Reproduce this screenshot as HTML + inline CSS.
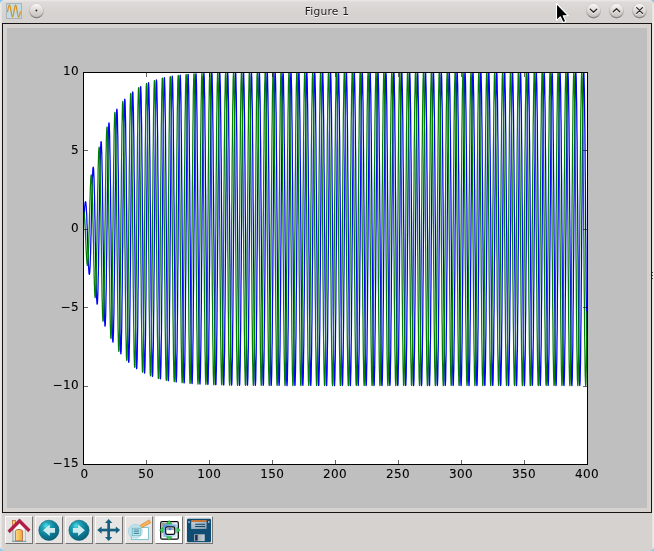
<!DOCTYPE html>
<html><head><meta charset="utf-8"><title>Figure 1</title>
<style>
html,body{margin:0;padding:0;}
body{width:654px;height:551px;overflow:hidden;background:#86ccf6;position:relative;font-family:"DejaVu Sans","Liberation Sans",sans-serif;}
.win{position:absolute;left:0;top:0;width:654px;height:551px;background:#d6d2d0;border-radius:5px;overflow:hidden;}
.edge{position:absolute;top:2px;width:1px;height:547px;}
.title{position:absolute;left:0;top:0;width:654px;height:23px;background:linear-gradient(#ecebea 0,#dddad8 2px,#d6d2d0 14px);}
.title .txt{position:absolute;left:0;width:654px;top:5px;text-align:center;font-size:10.7px;letter-spacing:0.2px;line-height:13px;color:#1a1a1a;text-shadow:0 1px 0 rgba(255,255,255,.9);will-change:transform;}
.frame{position:absolute;left:2px;top:23px;width:648px;height:488px;border:1px solid #161414;background:#d6d2d0;}
.fig{position:absolute;left:7px;top:28px;width:640px;height:480px;background:#bfbfbf;}
.plot{position:absolute;left:0;top:0;will-change:transform;}
.chrome{position:absolute;left:0;top:0;}
.btn{position:absolute;top:516px;width:26px;height:26px;background:#e6e5e4;border:1px solid;border-color:#fbfbfb #767472 #767472 #fbfbfb;}
</style></head><body>
<div class="win">
<div class="title"><div class="txt">Figure 1</div></div>
<div class="frame"></div>
<div class="fig"></div>
<svg class="plot" width="654" height="551" viewBox="0 0 654 551">
<defs><clipPath id="ax"><rect x="83.25" y="72.00" width="503.75" height="392.00"/></clipPath></defs>
<rect x="83.25" y="72.00" width="503.75" height="392.00" fill="#fff"/>
<g clip-path="url(#ax)" fill="none" stroke-width="1.25" stroke-linejoin="round">
<polyline stroke="#0000ff" points="83.2,228.8 83.4,227.2 83.5,225.4 83.6,223.5 83.8,221.6 83.9,219.6 84.0,217.6 84.1,215.6 84.3,213.6 84.4,211.7 84.5,209.8 84.6,208.1 84.8,206.5 84.9,205.1 85.0,203.9 85.1,203.0 85.3,202.3 85.4,201.8 85.5,201.7 85.6,201.9 85.8,202.3 85.9,203.1 86.0,204.2 86.1,205.7 86.3,207.4 86.4,209.5 86.5,211.8 86.7,214.5 86.8,217.4 86.9,220.5 87.0,223.8 87.2,227.3 87.3,230.9 87.4,234.7 87.5,238.4 87.7,242.2 87.8,246.0 87.9,249.7 88.0,253.3 88.2,256.8 88.3,260.0 88.4,263.0 88.5,265.8 88.7,268.2 88.8,270.2 88.9,271.9 89.0,273.2 89.2,274.0 89.3,274.4 89.4,274.3 89.5,273.8 89.7,272.7 89.8,271.2 89.9,269.2 90.1,266.7 90.2,263.8 90.3,260.5 90.4,256.7 90.6,252.6 90.7,248.1 90.8,243.4 90.9,238.4 91.1,233.2 91.2,227.9 91.3,222.5 91.4,217.0 91.6,211.6 91.7,206.2 91.8,201.0 91.9,195.9 92.1,191.1 92.2,186.6 92.3,182.5 92.4,178.8 92.6,175.5 92.7,172.7 92.8,170.4 92.9,168.7 93.1,167.6 93.2,167.1 93.3,167.3 93.5,168.0 93.6,169.4 93.7,171.4 93.8,174.0 94.0,177.3 94.1,181.1 94.2,185.4 94.3,190.2 94.5,195.5 94.6,201.3 94.7,207.3 94.8,213.7 95.0,220.3 95.1,227.1 95.2,234.0 95.3,240.9 95.5,247.8 95.6,254.6 95.7,261.2 95.8,267.5 96.0,273.6 96.1,279.2 96.2,284.4 96.3,289.1 96.5,293.3 96.6,296.8 96.7,299.7 96.9,301.9 97.0,303.4 97.1,304.2 97.2,304.2 97.4,303.4 97.5,301.9 97.6,299.6 97.7,296.6 97.9,292.8 98.0,288.4 98.1,283.3 98.2,277.6 98.4,271.4 98.5,264.7 98.6,257.5 98.7,250.0 98.9,242.2 99.0,234.2 99.1,226.1 99.2,217.9 99.4,209.7 99.5,201.7 99.6,193.9 99.7,186.3 99.9,179.1 100.0,172.4 100.1,166.2 100.3,160.5 100.4,155.5 100.5,151.2 100.6,147.6 100.8,144.8 100.9,142.9 101.0,141.8 101.1,141.6 101.3,142.2 101.4,143.7 101.5,146.1 101.6,149.3 101.8,153.4 101.9,158.3 102.0,163.9 102.1,170.2 102.3,177.1 102.4,184.6 102.5,192.6 102.6,201.1 102.8,209.8 102.9,218.9 103.0,228.1 103.1,237.3 103.3,246.6 103.4,255.7 103.5,264.6 103.7,273.2 103.8,281.4 103.9,289.2 104.0,296.4 104.2,302.9 104.3,308.8 104.4,313.9 104.5,318.2 104.7,321.6 104.8,324.0 104.9,325.6 105.0,326.2 105.2,325.8 105.3,324.4 105.4,322.0 105.5,318.7 105.7,314.5 105.8,309.4 105.9,303.5 106.0,296.7 106.2,289.3 106.3,281.2 106.4,272.5 106.5,263.3 106.7,253.8 106.8,243.9 106.9,233.8 107.1,223.7 107.2,213.5 107.3,203.4 107.4,193.5 107.6,183.9 107.7,174.8 107.8,166.1 107.9,158.0 108.1,150.6 108.2,143.9 108.3,138.0 108.4,133.0 108.6,129.0 108.7,125.9 108.8,123.9 108.9,122.9 109.1,123.0 109.2,124.1 109.3,126.3 109.4,129.5 109.6,133.7 109.7,138.9 109.8,145.1 109.9,152.1 110.1,159.9 110.2,168.4 110.3,177.6 110.5,187.3 110.6,197.5 110.7,208.0 110.8,218.8 111.0,229.8 111.1,240.8 111.2,251.7 111.3,262.4 111.5,272.8 111.6,282.9 111.7,292.4 111.8,301.3 112.0,309.6 112.1,317.1 112.2,323.7 112.3,329.4 112.5,334.1 112.6,337.7 112.7,340.3 112.8,341.8 113.0,342.2 113.1,341.4 113.2,339.5 113.3,336.4 113.5,332.3 113.6,327.1 113.7,320.9 113.9,313.8 114.0,305.8 114.1,297.0 114.2,287.5 114.4,277.3 114.5,266.7 114.6,255.6 114.7,244.2 114.9,232.6 115.0,221.0 115.1,209.3 115.2,197.9 115.4,186.7 115.5,175.8 115.6,165.5 115.7,155.8 115.9,146.8 116.0,138.6 116.1,131.2 116.2,124.8 116.4,119.4 116.5,115.1 116.6,112.0 116.7,110.0 116.9,109.1 117.0,109.5 117.1,111.1 117.3,113.8 117.4,117.7 117.5,122.8 117.6,128.9 117.8,136.0 117.9,144.1 118.0,153.1 118.1,162.8 118.3,173.2 118.4,184.3 118.5,195.7 118.6,207.6 118.8,219.7 118.9,231.9 119.0,244.2 119.1,256.3 119.3,268.2 119.4,279.7 119.5,290.7 119.6,301.1 119.8,310.9 119.9,319.8 120.0,327.9 120.1,335.0 120.3,341.0 120.4,346.0 120.5,349.7 120.7,352.3 120.8,353.7 120.9,353.8 121.0,352.6 121.2,350.2 121.3,346.6 121.4,341.8 121.5,335.8 121.7,328.8 121.8,320.8 121.9,311.8 122.0,301.9 122.2,291.3 122.3,280.1 122.4,268.3 122.5,256.0 122.7,243.5 122.8,230.8 122.9,218.1 123.0,205.4 123.2,193.0 123.3,180.8 123.4,169.2 123.6,158.0 123.7,147.6 123.8,138.0 123.9,129.2 124.1,121.5 124.2,114.8 124.3,109.2 124.4,104.8 124.6,101.6 124.7,99.7 124.8,99.1 124.9,99.8 125.1,101.8 125.2,105.0 125.3,109.5 125.4,115.2 125.6,122.1 125.7,130.0 125.8,139.0 125.9,148.8 126.1,159.5 126.2,170.9 126.3,182.9 126.4,195.3 126.6,208.2 126.7,221.2 126.8,234.4 127.0,247.5 127.1,260.5 127.2,273.2 127.3,285.4 127.5,297.2 127.6,308.2 127.7,318.5 127.8,327.9 128.0,336.3 128.1,343.7 128.2,349.9 128.3,354.9 128.5,358.7 128.6,361.2 128.7,362.3 128.8,362.2 129.0,360.7 129.1,357.8 129.2,353.7 129.3,348.3 129.5,341.7 129.6,334.0 129.7,325.2 129.8,315.4 130.0,304.8 130.1,293.3 130.2,281.2 130.4,268.6 130.5,255.5 130.6,242.2 130.7,228.7 130.9,215.2 131.0,201.7 131.1,188.6 131.2,175.8 131.4,163.5 131.5,151.9 131.6,141.0 131.7,131.0 131.9,121.9 132.0,113.9 132.1,107.1 132.2,101.4 132.4,97.0 132.5,93.9 132.6,92.2 132.7,91.8 132.9,92.8 133.0,95.2 133.1,98.9 133.2,103.9 133.4,110.2 133.5,117.6 133.6,126.2 133.8,135.8 133.9,146.4 134.0,157.8 134.1,169.9 134.3,182.6 134.4,195.8 134.5,209.4 134.6,223.2 134.8,237.0 134.9,250.8 135.0,264.4 135.1,277.6 135.3,290.4 135.4,302.5 135.5,314.0 135.6,324.6 135.8,334.3 135.9,342.9 136.0,350.4 136.1,356.7 136.3,361.7 136.4,365.4 136.5,367.7 136.6,368.7 136.8,368.2 136.9,366.3 137.0,363.1 137.2,358.5 137.3,352.7 137.4,345.5 137.5,337.3 137.7,327.9 137.8,317.5 137.9,306.2 138.0,294.1 138.2,281.3 138.3,268.1 138.4,254.4 138.5,240.4 138.7,226.3 138.8,212.2 138.9,198.3 139.0,184.6 139.2,171.4 139.3,158.7 139.4,146.8 139.5,135.6 139.7,125.4 139.8,116.1 139.9,108.0 140.0,101.1 140.2,95.5 140.3,91.2 140.4,88.2 140.6,86.7 140.7,86.6 140.8,87.9 140.9,90.6 141.1,94.7 141.2,100.2 141.3,106.9 141.4,114.9 141.6,124.0 141.7,134.1 141.8,145.3 141.9,157.2 142.1,169.9 142.2,183.2 142.3,197.0 142.4,211.1 142.6,225.4 142.7,239.7 142.8,253.9 142.9,267.9 143.1,281.6 143.2,294.7 143.3,307.1 143.4,318.8 143.6,329.6 143.7,339.4 143.8,348.1 144.0,355.6 144.1,361.9 144.2,366.8 144.3,370.4 144.5,372.5 144.6,373.2 144.7,372.5 144.8,370.3 145.0,366.7 145.1,361.8 145.2,355.5 145.3,347.9 145.5,339.1 145.6,329.2 145.7,318.3 145.8,306.5 146.0,293.9 146.1,280.7 146.2,266.9 146.3,252.7 146.5,238.3 146.6,223.8 146.7,209.3 146.8,195.0 147.0,181.0 147.1,167.5 147.2,154.6 147.4,142.4 147.5,131.1 147.6,120.7 147.7,111.5 147.9,103.3 148.0,96.5 148.1,90.9 148.2,86.8 148.4,84.0 148.5,82.7 148.6,82.8 148.7,84.4 148.9,87.5 149.0,92.0 149.1,97.8 149.2,104.9 149.4,113.3 149.5,122.9 149.6,133.5 149.7,145.1 149.9,157.5 150.0,170.7 150.1,184.4 150.2,198.6 150.4,213.1 150.5,227.8 150.6,242.4 150.8,257.0 150.9,271.3 151.0,285.2 151.1,298.5 151.3,311.1 151.4,322.9 151.5,333.8 151.6,343.7 151.8,352.4 151.9,359.8 152.0,366.0 152.1,370.8 152.3,374.2 152.4,376.1 152.5,376.5 152.6,375.5 152.8,373.0 152.9,369.1 153.0,363.8 153.1,357.1 153.3,349.1 153.4,339.9 153.5,329.6 153.6,318.3 153.8,306.1 153.9,293.1 154.0,279.5 154.2,265.3 154.3,250.8 154.4,236.0 154.5,221.2 154.7,206.4 154.8,191.9 154.9,177.7 155.0,164.0 155.2,150.9 155.3,138.6 155.4,127.3 155.5,116.9 155.7,107.6 155.8,99.6 155.9,92.8 156.0,87.4 156.2,83.4 156.3,80.8 156.4,79.8 156.5,80.2 156.7,82.1 156.8,85.4 156.9,90.2 157.0,96.4 157.2,104.0 157.3,112.7 157.4,122.7 157.6,133.7 157.7,145.6 157.8,158.4 157.9,171.9 158.1,186.0 158.2,200.5 158.3,215.3 158.4,230.3 158.6,245.2 158.7,260.0 158.8,274.5 158.9,288.5 159.1,301.9 159.2,314.6 159.3,326.5 159.4,337.4 159.6,347.2 159.7,355.8 159.8,363.2 159.9,369.2 160.1,373.8 160.2,377.0 160.3,378.7 160.4,378.9 160.6,377.6 160.7,374.8 160.8,370.6 161.0,364.9 161.1,357.9 161.2,349.5 161.3,340.0 161.5,329.4 161.6,317.7 161.7,305.1 161.8,291.8 162.0,277.9 162.1,263.4 162.2,248.6 162.3,233.6 162.5,218.5 162.6,203.6 162.7,188.9 162.8,174.5 163.0,160.7 163.1,147.6 163.2,135.3 163.3,123.9 163.5,113.6 163.6,104.4 163.7,96.5 163.9,89.8 164.0,84.6 164.1,80.8 164.2,78.5 164.4,77.6 164.5,78.3 164.6,80.5 164.7,84.2 164.9,89.3 165.0,95.8 165.1,103.7 165.2,112.8 165.4,123.0 165.5,134.4 165.6,146.6 165.7,159.7 165.9,173.5 166.0,187.9 166.1,202.6 166.2,217.7 166.4,232.8 166.5,247.9 166.6,262.9 166.7,277.5 166.9,291.6 167.0,305.0 167.1,317.8 167.3,329.6 167.4,340.5 167.5,350.2 167.6,358.7 167.8,365.9 167.9,371.8 168.0,376.2 168.1,379.2 168.3,380.6 168.4,380.6 168.5,379.0 168.6,375.9 168.8,371.3 168.9,365.4 169.0,358.0 169.1,349.4 169.3,339.5 169.4,328.6 169.5,316.6 169.6,303.8 169.8,290.2 169.9,276.0 170.0,261.3 170.1,246.3 170.3,231.1 170.4,215.9 170.5,200.8 170.7,186.0 170.8,171.6 170.9,157.7 171.0,144.6 171.2,132.3 171.3,121.0 171.4,110.8 171.5,101.7 171.7,93.9 171.8,87.4 171.9,82.4 172.0,78.8 172.2,76.7 172.3,76.1 172.4,77.1 172.5,79.6 172.7,83.5 172.8,88.9 172.9,95.8 173.0,103.9 173.2,113.3 173.3,123.9 173.4,135.5 173.5,148.0 173.7,161.4 173.8,175.4 173.9,190.0 174.1,204.9 174.2,220.1 174.3,235.4 174.4,250.7 174.6,265.7 174.7,280.3 174.8,294.5 174.9,308.0 175.1,320.7 175.2,332.4 175.3,343.2 175.4,352.8 175.6,361.2 175.7,368.2 175.8,373.9 175.9,378.1 176.1,380.8 176.2,382.0 176.3,381.7 176.4,379.8 176.6,376.5 176.7,371.6 176.8,365.4 176.9,357.7 177.1,348.8 177.2,338.7 177.3,327.4 177.5,315.2 177.6,302.1 177.7,288.3 177.8,273.9 178.0,259.0 178.1,243.9 178.2,228.5 178.3,213.2 178.5,198.0 178.6,183.1 178.7,168.7 178.8,154.9 179.0,141.8 179.1,129.6 179.2,118.4 179.3,108.2 179.5,99.3 179.6,91.7 179.7,85.4 179.8,80.6 180.0,77.2 180.1,75.4 180.2,75.1 180.3,76.3 180.5,79.1 180.6,83.3 180.7,89.0 180.9,96.1 181.0,104.5 181.1,114.2 181.2,125.0 181.4,136.9 181.5,149.7 181.6,163.2 181.7,177.5 181.9,192.2 182.0,207.3 182.1,222.7 182.2,238.1 182.4,253.4 182.5,268.4 182.6,283.1 182.7,297.2 182.9,310.7 183.0,323.3 183.1,335.0 183.2,345.6 183.4,355.1 183.5,363.3 183.6,370.2 183.7,375.6 183.9,379.6 184.0,382.1 184.1,383.0 184.3,382.4 184.4,380.3 184.5,376.7 184.6,371.5 184.8,365.0 184.9,357.1 185.0,347.9 185.1,337.5 185.3,326.0 185.4,313.6 185.5,300.3 185.6,286.3 185.8,271.7 185.9,256.7 186.0,241.4 186.1,225.9 186.3,210.5 186.4,195.3 186.5,180.4 186.6,166.0 186.8,152.2 186.9,139.2 187.0,127.1 187.1,116.0 187.3,106.0 187.4,97.2 187.5,89.8 187.7,83.7 187.8,79.1 187.9,76.0 188.0,74.4 188.2,74.4 188.3,75.9 188.4,78.9 188.5,83.4 188.7,89.4 188.8,96.8 188.9,105.5 189.0,115.4 189.2,126.4 189.3,138.5 189.4,151.5 189.5,165.3 189.7,179.7 189.8,194.6 189.9,209.8 190.0,225.2 190.2,240.7 190.3,256.1 190.4,271.1 190.5,285.8 190.7,299.9 190.8,313.3 190.9,325.8 191.1,337.4 191.2,347.9 191.3,357.2 191.4,365.2 191.6,371.8 191.7,377.1 191.8,380.8 191.9,383.0 192.1,383.7 192.2,382.9 192.3,380.5 192.4,376.5 192.6,371.2 192.7,364.3 192.8,356.2 192.9,346.7 193.1,336.1 193.2,324.4 193.3,311.7 193.4,298.3 193.6,284.1 193.7,269.3 193.8,254.2 193.9,238.8 194.1,223.3 194.2,207.9 194.3,192.6 194.5,177.8 194.6,163.4 194.7,149.7 194.8,136.7 195.0,124.7 195.1,113.8 195.2,103.9 195.3,95.4 195.5,88.1 195.6,82.3 195.7,77.9 195.8,75.0 196.0,73.7 196.1,73.9 196.2,75.7 196.3,79.0 196.5,83.8 196.6,90.0 196.7,97.7 196.8,106.6 197.0,116.8 197.1,128.0 197.2,140.3 197.3,153.5 197.5,167.4 197.6,182.0 197.7,197.0 197.9,212.3 198.0,227.8 198.1,243.4 198.2,258.7 198.4,273.8 198.5,288.4 198.6,302.4 198.7,315.7 198.9,328.2 199.0,339.6 199.1,349.9 199.2,359.0 199.4,366.9 199.5,373.3 199.6,378.3 199.7,381.8 199.9,383.8 200.0,384.2 200.1,383.1 200.2,380.4 200.4,376.2 200.5,370.6 200.6,363.5 200.7,355.1 200.9,345.4 201.0,334.5 201.1,322.6 201.3,309.8 201.4,296.1 201.5,281.8 201.6,266.9 201.8,251.7 201.9,236.2 202.0,220.7 202.1,205.2 202.3,190.0 202.4,175.1 202.5,160.8 202.6,147.2 202.8,134.4 202.9,122.5 203.0,111.7 203.1,102.0 203.3,93.7 203.4,86.6 203.5,81.0 203.6,76.9 203.8,74.3 203.9,73.2 204.0,73.7 204.1,75.7 204.3,79.3 204.4,84.3 204.5,90.8 204.7,98.7 204.8,107.9 204.9,118.3 205.0,129.8 205.2,142.3 205.3,155.6 205.4,169.7 205.5,184.4 205.7,199.5 205.8,214.9 205.9,230.5 206.0,246.0 206.2,261.4 206.3,276.4 206.4,291.0 206.5,304.9 206.7,318.1 206.8,330.4 206.9,341.7 207.0,351.8 207.2,360.8 207.3,368.4 207.4,374.6 207.6,379.3 207.7,382.6 207.8,384.3 207.9,384.5 208.1,383.1 208.2,380.2 208.3,375.7 208.4,369.8 208.6,362.5 208.7,353.8 208.8,343.9 208.9,332.8 209.1,320.7 209.2,307.7 209.3,293.9 209.4,279.4 209.6,264.5 209.7,249.2 209.8,233.6 209.9,218.0 210.1,202.6 210.2,187.4 210.3,172.6 210.4,158.3 210.6,144.8 210.7,132.1 210.8,120.4 211.0,109.7 211.1,100.3 211.2,92.1 211.3,85.3 211.5,79.9 211.6,76.0 211.7,73.7 211.8,72.9 212.0,73.6 212.1,75.9 212.2,79.7 212.3,85.0 212.5,91.8 212.6,99.9 212.7,109.3 212.8,119.9 213.0,131.6 213.1,144.3 213.2,157.8 213.3,172.0 213.5,186.8 213.6,202.0 213.7,217.5 213.8,233.1 214.0,248.6 214.1,264.0 214.2,279.0 214.4,293.5 214.5,307.3 214.6,320.4 214.7,332.6 214.9,343.7 215.0,353.6 215.1,362.4 215.2,369.8 215.4,375.7 215.5,380.3 215.6,383.3 215.7,384.7 215.9,384.6 216.0,383.0 216.1,379.8 216.2,375.1 216.4,368.9 216.5,361.3 216.6,352.4 216.7,342.3 216.9,331.0 217.0,318.8 217.1,305.6 217.2,291.6 217.4,277.0 217.5,262.0 217.6,246.6 217.8,231.0 217.9,215.4 218.0,200.0 218.1,184.8 218.3,170.0 218.4,155.9 218.5,142.5 218.6,129.9 218.8,118.3 218.9,107.9 219.0,98.6 219.1,90.6 219.3,84.1 219.4,78.9 219.5,75.3 219.6,73.2 219.8,72.6 219.9,73.7 220.0,76.2 220.1,80.3 220.3,85.9 220.4,92.9 220.5,101.2 220.6,110.9 220.8,121.7 220.9,133.6 221.0,146.4 221.2,160.0 221.3,174.4 221.4,189.3 221.5,204.6 221.7,220.1 221.8,235.7 221.9,251.3 222.0,266.6 222.2,281.5 222.3,295.9 222.4,309.7 222.5,322.6 222.7,334.6 222.8,345.6 222.9,355.4 223.0,363.9 223.2,371.1 223.3,376.8 223.4,381.1 223.5,383.8 223.7,385.0 223.8,384.6 223.9,382.7 224.0,379.3 224.2,374.3 224.3,367.9 224.4,360.1 224.6,351.0 224.7,340.6 224.8,329.2 224.9,316.7 225.1,303.4 225.2,289.3 225.3,274.6 225.4,259.4 225.6,244.0 225.7,228.4 225.8,212.8 225.9,197.3 226.1,182.2 226.2,167.5 226.3,153.5 226.4,140.2 226.6,127.8 226.7,116.4 226.8,106.1 226.9,97.0 227.1,89.3 227.2,82.9 227.3,78.0 227.4,74.7 227.6,72.8 227.7,72.5 227.8,73.8 228.0,76.6 228.1,81.0 228.2,86.8 228.3,94.0 228.5,102.6 228.6,112.5 228.7,123.5 228.8,135.6 229.0,148.6 229.1,162.3 229.2,176.8 229.3,191.8 229.5,207.1 229.6,222.7 229.7,238.3 229.8,253.9 230.0,269.2 230.1,284.0 230.2,298.4 230.3,312.0 230.5,324.8 230.6,336.7 230.7,347.4 230.8,357.0 231.0,365.3 231.1,372.3 231.2,377.8 231.4,381.8 231.5,384.3 231.6,385.2 231.7,384.6 231.9,382.4 232.0,378.7 232.1,373.5 232.2,366.8 232.4,358.8 232.5,349.4 232.6,338.9 232.7,327.2 232.9,314.6 233.0,301.1 233.1,286.9 233.2,272.1 233.4,256.9 233.5,241.4 233.6,225.8 233.7,210.2 233.9,194.7 234.0,179.7 234.1,165.1 234.2,151.1 234.4,138.0 234.5,125.7 234.6,114.5 234.8,104.4 234.9,95.5 235.0,88.0 235.1,81.9 235.3,77.3 235.4,74.1 235.5,72.5 235.6,72.5 235.8,74.1 235.9,77.1 236.0,81.7 236.1,87.8 236.3,95.3 236.4,104.1 236.5,114.2 236.6,125.4 236.8,137.6 236.9,150.8 237.0,164.7 237.1,179.3 237.3,194.3 237.4,209.7 237.5,225.3 237.6,241.0 237.8,256.5 237.9,271.7 238.0,286.5 238.2,300.8 238.3,314.3 238.4,326.9 238.5,338.6 238.7,349.2 238.8,358.6 238.9,366.7 239.0,373.4 239.2,378.6 239.3,382.4 239.4,384.6 239.5,385.3 239.7,384.4 239.8,382.0 239.9,378.0 240.0,372.5 240.2,365.6 240.3,357.4 240.4,347.8 240.5,337.1 240.7,325.2 240.8,312.4 240.9,298.8 241.0,284.5 241.2,269.6 241.3,254.3 241.4,238.8 241.6,223.1 241.7,207.5 241.8,192.2 241.9,177.1 242.1,162.6 242.2,148.8 242.3,135.8 242.4,123.7 242.6,112.6 242.7,102.7 242.8,94.1 242.9,86.8 243.1,80.9 243.2,76.5 243.3,73.7 243.4,72.3 243.6,72.6 243.7,74.4 243.8,77.7 243.9,82.6 244.1,88.9 244.2,96.6 244.3,105.6 244.5,115.9 244.6,127.3 244.7,139.7 244.8,153.0 245.0,167.1 245.1,181.7 245.2,196.9 245.3,212.3 245.5,228.0 245.6,243.6 245.7,259.1 245.8,274.3 246.0,289.0 246.1,303.1 246.2,316.5 246.3,329.0 246.5,340.5 246.6,350.9 246.7,360.1 246.8,368.0 247.0,374.4 247.1,379.5 247.2,383.0 247.3,384.9 247.5,385.3 247.6,384.2 247.7,381.5 247.9,377.3 248.0,371.5 248.1,364.4 248.2,355.9 248.4,346.1 248.5,335.2 248.6,323.2 248.7,310.2 248.9,296.5 249.0,282.0 249.1,267.1 249.2,251.7 249.4,236.1 249.5,220.5 249.6,204.9 249.7,189.6 249.9,174.6 250.0,160.2 250.1,146.5 250.2,133.6 250.4,121.7 250.5,110.8 250.6,101.1 250.7,92.7 250.9,85.6 251.0,80.0 251.1,75.9 251.3,73.3 251.4,72.2 251.5,72.7 251.6,74.8 251.8,78.4 251.9,83.5 252.0,90.0 252.1,98.0 252.3,107.2 252.4,117.7 252.5,129.3 252.6,141.9 252.8,155.3 252.9,169.5 253.0,184.2 253.1,199.5 253.3,215.0 253.4,230.6 253.5,246.2 253.6,261.7 253.8,276.8 253.9,291.5 254.0,305.5 254.1,318.7 254.3,331.1 254.4,342.4 254.5,352.6 254.7,361.6 254.8,369.2 254.9,375.4 255.0,380.2 255.2,383.5 255.3,385.2 255.4,385.3 255.5,383.9 255.7,380.9 255.8,376.4 255.9,370.5 256.0,363.1 256.2,354.4 256.3,344.4 256.4,333.3 256.5,321.1 256.7,308.0 256.8,294.1 256.9,279.6 257.0,264.5 257.2,249.1 257.3,233.5 257.4,217.9 257.5,202.3 257.7,187.0 257.8,172.2 257.9,157.9 258.1,144.3 258.2,131.5 258.3,119.7 258.4,109.1 258.6,99.6 258.7,91.4 258.8,84.6 258.9,79.2 259.1,75.3 259.2,72.9 259.3,72.1 259.4,72.9 259.6,75.2 259.7,79.1 259.8,84.4 259.9,91.2 260.1,99.4 260.2,108.9 260.3,119.5 260.4,131.3 260.6,144.0 260.7,157.6 260.8,171.9 260.9,186.8 261.1,202.0 261.2,217.6 261.3,233.2 261.5,248.9 261.6,264.3 261.7,279.3 261.8,293.9 262.0,307.8 262.1,320.9 262.2,333.1 262.3,344.2 262.5,354.2 262.6,363.0 262.7,370.4 262.8,376.4 263.0,380.9 263.1,383.9 263.2,385.3 263.3,385.2 263.5,383.5 263.6,380.3 263.7,375.6 263.8,369.4 264.0,361.8 264.1,352.8 264.2,342.6 264.3,331.3 264.5,319.0 264.6,305.7 264.7,291.7 264.9,277.1 265.0,262.0 265.1,246.5 265.2,230.9 265.4,215.2 265.5,199.7 265.6,184.5 265.7,169.7 265.9,155.5 266.0,142.0 266.1,129.4 266.2,117.8 266.4,107.4 266.5,98.1 266.6,90.1 266.7,83.5 266.9,78.4 267.0,74.7 267.1,72.6 267.2,72.1 267.4,73.1 267.5,75.7 267.6,79.8 267.7,85.5 267.9,92.5 268.0,100.9 268.1,110.6 268.3,121.4 268.4,133.4 268.5,146.2 268.6,160.0 268.8,174.4 268.9,189.3 269.0,204.6 269.1,220.2 269.3,235.9 269.4,251.5 269.5,266.8 269.6,281.8 269.8,296.3 269.9,310.1 270.0,323.0 270.1,335.1 270.3,346.0 270.4,355.8 270.5,364.4 270.6,371.5 270.8,377.3 270.9,381.5 271.0,384.3 271.1,385.5 271.3,385.1 271.4,383.1 271.5,379.7 271.7,374.7 271.8,368.2 271.9,360.4 272.0,351.2 272.2,340.8 272.3,329.3 272.4,316.8 272.5,303.4 272.7,289.3 272.8,274.6 272.9,259.4 273.0,243.9 273.2,228.2 273.3,212.6 273.4,197.1 273.5,182.0 273.7,167.3 273.8,153.2 273.9,139.8 274.0,127.4 274.2,116.0 274.3,105.7 274.4,96.6 274.5,88.9 274.7,82.5 274.8,77.6 274.9,74.3 275.1,72.4 275.2,72.2 275.3,73.4 275.4,76.3 275.6,80.7 275.7,86.5 275.8,93.8 275.9,102.4 276.1,112.3 276.2,123.3 276.3,135.4 276.4,148.5 276.6,162.3 276.7,176.8 276.8,191.8 276.9,207.2 277.1,222.8 277.2,238.5 277.3,254.1 277.4,269.4 277.6,284.3 277.7,298.7 277.8,312.3 277.9,325.1 278.1,337.0 278.2,347.8 278.3,357.4 278.5,365.7 278.6,372.6 278.7,378.1 278.8,382.1 279.0,384.6 279.1,385.5 279.2,384.9 279.3,382.7 279.5,378.9 279.6,373.7 279.7,367.0 279.8,358.9 280.0,349.6 280.1,339.0 280.2,327.3 280.3,314.7 280.5,301.1 280.6,286.9 280.7,272.1 280.8,256.8 281.0,241.3 281.1,225.6 281.2,210.0 281.3,194.5 281.5,179.4 281.6,164.8 281.7,150.9 281.9,137.7 282.0,125.4 282.1,114.2 282.2,104.1 282.4,95.2 282.5,87.7 282.6,81.6 282.7,76.9 282.9,73.8 283.0,72.3 283.1,72.2 283.2,73.8 283.4,76.9 283.5,81.5 283.6,87.6 283.7,95.1 283.9,104.0 284.0,114.1 284.1,125.3 284.2,137.6 284.4,150.7 284.5,164.7 284.6,179.3 284.8,194.4 284.9,209.8 285.0,225.5 285.1,241.1 285.3,256.7 285.4,271.9 285.5,286.8 285.6,301.0 285.8,314.5 285.9,327.2 286.0,338.9 286.1,349.5 286.3,358.9 286.4,367.0 286.5,373.7 286.6,378.9 286.8,382.7 286.9,384.9 287.0,385.6 287.1,384.6 287.3,382.2 287.4,378.2 287.5,372.7 287.6,365.8 287.8,357.5 287.9,347.9 288.0,337.1 288.2,325.3 288.3,312.4 288.4,298.8 288.5,284.4 288.7,269.5 288.8,254.2 288.9,238.6 289.0,223.0 289.2,207.4 289.3,192.0 289.4,176.9 289.5,162.4 289.7,148.6 289.8,135.5 289.9,123.4 290.0,112.4 290.2,102.5 290.3,93.8 290.4,86.5 290.5,80.7 290.7,76.3 290.8,73.4 290.9,72.1 291.0,72.4 291.2,74.2 291.3,77.6 291.4,82.4 291.6,88.8 291.7,96.5 291.8,105.6 291.9,115.9 292.1,127.3 292.2,139.7 292.3,153.0 292.4,167.1 292.6,181.8 292.7,197.0 292.8,212.5 292.9,228.1 293.1,243.8 293.2,259.3 293.3,274.5 293.4,289.2 293.6,303.4 293.7,316.7 293.8,329.3 293.9,340.8 294.1,351.2 294.2,360.3 294.3,368.2 294.4,374.7 294.6,379.7 294.7,383.2 294.8,385.1 295.0,385.5 295.1,384.3 295.2,381.6 295.3,377.4 295.5,371.6 295.6,364.5 295.7,356.0 295.8,346.2 296.0,335.2 296.1,323.2 296.2,310.2 296.3,296.4 296.5,282.0 296.6,267.0 296.7,251.6 296.8,236.0 297.0,220.3 297.1,204.8 297.2,189.4 297.3,174.5 297.5,160.0 297.6,146.3 297.7,133.4 297.8,121.5 298.0,110.6 298.1,100.9 298.2,92.5 298.4,85.4 298.5,79.8 298.6,75.7 298.7,73.1 298.9,72.0 299.0,72.6 299.1,74.7 299.2,78.3 299.4,83.4 299.5,90.0 299.6,97.9 299.7,107.2 299.9,117.7 300.0,129.3 300.1,141.9 300.2,155.4 300.4,169.5 300.5,184.3 300.6,199.6 300.7,215.1 300.9,230.7 301.0,246.4 301.1,261.8 301.2,277.0 301.4,291.6 301.5,305.7 301.6,318.9 301.8,331.3 301.9,342.6 302.0,352.8 302.1,361.8 302.3,369.4 302.4,375.6 302.5,380.4 302.6,383.6 302.8,385.3 302.9,385.4 303.0,384.0 303.1,381.0 303.3,376.5 303.4,370.5 303.5,363.1 303.6,354.4 303.8,344.4 303.9,333.3 304.0,321.1 304.1,307.9 304.3,294.0 304.4,279.5 304.5,264.4 304.6,249.0 304.8,233.4 304.9,217.7 305.0,202.2 305.2,186.9 305.3,172.0 305.4,157.7 305.5,144.1 305.7,131.3 305.8,119.6 305.9,108.9 306.0,99.4 306.2,91.2 306.3,84.4 306.4,79.0 306.5,75.1 306.7,72.8 306.8,72.0 306.9,72.8 307.0,75.1 307.2,79.0 307.3,84.4 307.4,91.2 307.5,99.4 307.7,108.9 307.8,119.6 307.9,131.3 308.0,144.1 308.2,157.7 308.3,172.0 308.4,186.9 308.6,202.2 308.7,217.7 308.8,233.4 308.9,249.0 309.1,264.4 309.2,279.5 309.3,294.0 309.4,308.0 309.6,321.1 309.7,333.3 309.8,344.4 309.9,354.4 310.1,363.1 310.2,370.5 310.3,376.5 310.4,381.0 310.6,384.0 310.7,385.4 310.8,385.3 310.9,383.6 311.1,380.4 311.2,375.6 311.3,369.4 311.4,361.8 311.6,352.8 311.7,342.6 311.8,331.3 312.0,318.9 312.1,305.7 312.2,291.6 312.3,277.0 312.5,261.8 312.6,246.4 312.7,230.7 312.8,215.1 313.0,199.6 313.1,184.3 313.2,169.5 313.3,155.3 313.5,141.9 313.6,129.3 313.7,117.7 313.8,107.2 314.0,97.9 314.1,90.0 314.2,83.4 314.3,78.3 314.5,74.6 314.6,72.6 314.7,72.0 314.8,73.1 315.0,75.7 315.1,79.8 315.2,85.4 315.4,92.5 315.5,100.9 315.6,110.6 315.7,121.5 315.9,133.4 316.0,146.3 316.1,160.0 316.2,174.5 316.4,189.4 316.5,204.8 316.6,220.3 316.7,236.0 316.9,251.6 317.0,267.0 317.1,282.0 317.2,296.4 317.4,310.2 317.5,323.2 317.6,335.2 317.7,346.2 317.9,356.0 318.0,364.5 318.1,371.7 318.2,377.4 318.4,381.6 318.5,384.4 318.6,385.5 318.8,385.1 318.9,383.2 319.0,379.7 319.1,374.7 319.3,368.2 319.4,360.4 319.5,351.2 319.6,340.8 319.8,329.3 319.9,316.8 320.0,303.4 320.1,289.2 320.3,274.5 320.4,259.3 320.5,243.8 320.6,228.1 320.8,212.5 320.9,197.0 321.0,181.8 321.1,167.1 321.3,153.0 321.4,139.7 321.5,127.3 321.6,115.8 321.8,105.6 321.9,96.5 322.0,88.8 322.2,82.4 322.3,77.5 322.4,74.2 322.5,72.4 322.7,72.1 322.8,73.4 322.9,76.3 323.0,80.7 323.2,86.5 323.3,93.8 323.4,102.4 323.5,112.3 323.7,123.4 323.8,135.5 323.9,148.6 324.0,162.4 324.2,176.9 324.3,192.0 324.4,207.4 324.5,223.0 324.7,238.6 324.8,254.2 324.9,269.5 325.0,284.5 325.2,298.8 325.3,312.5 325.4,325.3 325.6,337.1 325.7,347.9 325.8,357.5 325.9,365.8 326.1,372.7 326.2,378.2 326.3,382.2 326.4,384.7 326.6,385.6 326.7,384.9 326.8,382.7 326.9,379.0 327.1,373.7 327.2,367.0 327.3,358.9 327.4,349.5 327.6,338.9 327.7,327.2 327.8,314.6 327.9,301.0 328.1,286.8 328.2,271.9 328.3,256.7 328.5,241.1 328.6,225.5 328.7,209.8 328.8,194.4 329.0,179.3 329.1,164.7 329.2,150.7 329.3,137.5 329.5,125.3 329.6,114.0 329.7,103.9 329.8,95.1 330.0,87.6 330.1,81.5 330.2,76.9 330.3,73.8 330.5,72.2 330.6,72.2 330.7,73.8 330.8,76.9 331.0,81.5 331.1,87.6 331.2,95.2 331.3,104.0 331.5,114.1 331.6,125.4 331.7,137.7 331.9,150.8 332.0,164.8 332.1,179.4 332.2,194.5 332.4,210.0 332.5,225.6 332.6,241.3 332.7,256.8 332.9,272.1 333.0,286.9 333.1,301.2 333.2,314.7 333.4,327.3 333.5,339.0 333.6,349.6 333.7,359.0 333.9,367.1 334.0,373.8 334.1,379.0 334.2,382.7 334.4,384.9 334.5,385.6 334.6,384.7 334.7,382.2 334.9,378.2 335.0,372.7 335.1,365.7 335.3,357.4 335.4,347.8 335.5,337.0 335.6,325.2 335.8,312.3 335.9,298.7 336.0,284.3 336.1,269.4 336.3,254.1 336.4,238.5 336.5,222.8 336.6,207.2 336.8,191.8 336.9,176.8 337.0,162.3 337.1,148.4 337.3,135.4 337.4,123.3 337.5,112.2 337.6,102.4 337.8,93.7 337.9,86.5 338.0,80.6 338.1,76.2 338.3,73.4 338.4,72.1 338.5,72.4 338.7,74.2 338.8,77.6 338.9,82.5 339.0,88.8 339.2,96.6 339.3,105.6 339.4,115.9 339.5,127.4 339.7,139.8 339.8,153.1 339.9,167.2 340.0,181.9 340.2,197.1 340.3,212.6 340.4,228.2 340.5,243.9 340.7,259.4 340.8,274.6 340.9,289.3 341.0,303.5 341.2,316.9 341.3,329.4 341.4,340.9 341.5,351.3 341.7,360.4 341.8,368.3 341.9,374.7 342.1,379.7 342.2,383.2 342.3,385.2 342.4,385.5 342.6,384.4 342.7,381.6 342.8,377.4 342.9,371.6 343.1,364.4 343.2,355.9 343.3,346.1 343.4,335.1 343.6,323.1 343.7,310.1 343.8,296.3 343.9,281.8 344.1,266.8 344.2,251.5 344.3,235.9 344.4,220.2 344.6,204.6 344.7,189.3 344.8,174.3 344.9,159.9 345.1,146.2 345.2,133.3 345.3,121.4 345.5,110.5 345.6,100.8 345.7,92.4 345.8,85.4 346.0,79.8 346.1,75.6 346.2,73.1 346.3,72.0 346.5,72.6 346.6,74.7 346.7,78.3 346.8,83.4 347.0,90.0 347.1,98.0 347.2,107.3 347.3,117.8 347.5,129.4 347.6,142.0 347.7,155.5 347.8,169.7 348.0,184.5 348.1,199.7 348.2,215.2 348.3,230.9 348.5,246.5 348.6,262.0 348.7,277.1 348.9,291.8 349.0,305.8 349.1,319.0 349.2,331.4 349.4,342.7 349.5,352.9 349.6,361.9 349.7,369.5 349.9,375.7 350.0,380.4 350.1,383.7 350.2,385.3 350.4,385.5 350.5,384.0 350.6,381.0 350.7,376.5 350.9,370.5 351.0,363.1 351.1,354.3 351.2,344.3 351.4,333.2 351.5,321.0 351.6,307.8 351.7,293.9 351.9,279.4 352.0,264.3 352.1,248.9 352.3,233.2 352.4,217.6 352.5,202.0 352.6,186.7 352.8,171.9 352.9,157.6 353.0,144.0 353.1,131.2 353.3,119.5 353.4,108.8 353.5,99.3 353.6,91.1 353.8,84.3 353.9,79.0 354.0,75.1 354.1,72.8 354.3,72.0 354.4,72.8 354.5,75.2 354.6,79.0 354.8,84.4 354.9,91.3 355.0,99.5 355.1,109.0 355.3,119.7 355.4,131.4 355.5,144.2 355.7,157.8 355.8,172.1 355.9,187.0 356.0,202.3 356.2,217.8 356.3,233.5 356.4,249.1 356.5,264.6 356.7,279.6 356.8,294.2 356.9,308.1 357.0,321.2 357.2,333.4 357.3,344.5 357.4,354.5 357.5,363.2 357.7,370.6 357.8,376.6 357.9,381.1 358.0,384.0 358.2,385.5 358.3,385.3 358.4,383.6 358.5,380.4 358.7,375.6 358.8,369.3 358.9,361.7 359.1,352.7 359.2,342.5 359.3,331.2 359.4,318.8 359.6,305.5 359.7,291.5 359.8,276.9 359.9,261.7 360.1,246.2 360.2,230.6 360.3,214.9 360.4,199.4 360.6,184.2 360.7,169.4 360.8,155.2 360.9,141.8 361.1,129.2 361.2,117.6 361.3,107.1 361.4,97.8 361.6,89.9 361.7,83.3 361.8,78.2 361.9,74.6 362.1,72.5 362.2,72.0 362.3,73.1 362.5,75.7 362.6,79.8 362.7,85.5 362.8,92.6 363.0,101.0 363.1,110.7 363.2,121.6 363.3,133.5 363.5,146.4 363.6,160.2 363.7,174.6 363.8,189.5 364.0,204.9 364.1,220.5 364.2,236.2 364.3,251.8 364.5,267.1 364.6,282.1 364.7,296.6 364.8,310.3 365.0,323.3 365.1,335.3 365.2,346.3 365.4,356.1 365.5,364.6 365.6,371.7 365.7,377.4 365.9,381.7 366.0,384.4 366.1,385.6 366.2,385.1 366.4,383.2 366.5,379.7 366.6,374.6 366.7,368.2 366.9,360.3 367.0,351.1 367.1,340.7 367.2,329.2 367.4,316.6 367.5,303.2 367.6,289.1 367.7,274.3 367.9,259.1 368.0,243.6 368.1,228.0 368.2,212.3 368.4,196.8 368.5,181.7 368.6,167.0 368.8,152.9 368.9,139.6 369.0,127.2 369.1,115.7 369.3,105.5 369.4,96.4 369.5,88.7 369.6,82.4 369.8,77.5 369.9,74.1 370.0,72.3 370.1,72.1 370.3,73.4 370.4,76.3 370.5,80.7 370.6,86.6 370.8,93.9 370.9,102.5 371.0,112.4 371.1,123.5 371.3,135.6 371.4,148.7 371.5,162.5 371.6,177.1 371.8,192.1 371.9,207.5 372.0,223.1 372.2,238.8 372.3,254.4 372.4,269.7 372.5,284.6 372.7,298.9 372.8,312.6 372.9,325.4 373.0,337.2 373.2,348.0 373.3,357.6 373.4,365.9 373.5,372.8 373.7,378.3 373.8,382.2 373.9,384.7 374.0,385.6 374.2,384.9 374.3,382.7 374.4,378.9 374.5,373.6 374.7,366.9 374.8,358.8 374.9,349.4 375.0,338.8 375.2,327.1 375.3,314.4 375.4,300.9 375.6,286.6 375.7,271.8 375.8,256.5 375.9,241.0 376.1,225.3 376.2,209.7 376.3,194.3 376.4,179.2 376.6,164.6 376.7,150.6 376.8,137.4 376.9,125.2 377.1,113.9 377.2,103.8 377.3,95.0 377.4,87.5 377.6,81.4 377.7,76.8 377.8,73.7 377.9,72.2 378.1,72.2 378.2,73.8 378.3,76.9 378.4,81.6 378.6,87.7 378.7,95.2 378.8,104.1 379.0,114.2 379.1,125.5 379.2,137.8 379.3,151.0 379.5,164.9 379.6,179.6 379.7,194.7 379.8,210.1 380.0,225.8 380.1,241.4 380.2,257.0 380.3,272.2 380.5,287.0 380.6,301.3 380.7,314.8 380.8,327.5 381.0,339.1 381.1,349.7 381.2,359.1 381.3,367.1 381.5,373.8 381.6,379.0 381.7,382.8 381.8,385.0 382.0,385.6 382.1,384.7 382.2,382.2 382.4,378.1 382.5,372.6 382.6,365.7 382.7,357.3 382.9,347.7 383.0,336.9 383.1,325.1 383.2,312.2 383.4,298.6 383.5,284.2 383.6,269.3 383.7,253.9 383.9,238.4 384.0,222.7 384.1,207.1 384.2,191.7 384.4,176.7 384.5,162.2 384.6,148.3 384.7,135.3 384.9,123.2 385.0,112.1 385.1,102.3 385.2,93.7 385.4,86.4 385.5,80.6 385.6,76.2 385.8,73.4 385.9,72.1 386.0,72.4 386.1,74.2 386.3,77.6 386.4,82.5 386.5,88.9 386.6,96.6 386.8,105.7 386.9,116.0 387.0,127.5 387.1,139.9 387.3,153.3 387.4,167.4 387.5,182.1 387.6,197.2 387.8,212.7 387.9,228.4 388.0,244.0 388.1,259.5 388.3,274.7 388.4,289.5 388.5,303.6 388.6,317.0 388.8,329.5 388.9,341.0 389.0,351.4 389.2,360.5 389.3,368.4 389.4,374.8 389.5,379.8 389.7,383.2 389.8,385.2 389.9,385.5 390.0,384.3 390.2,381.6 390.3,377.3 390.4,371.5 390.5,364.4 390.7,355.8 390.8,346.0 390.9,335.0 391.0,323.0 391.2,310.0 391.3,296.2 391.4,281.7 391.5,266.7 391.7,251.3 391.8,235.7 391.9,220.1 392.0,204.5 392.2,189.1 392.3,174.2 392.4,159.8 392.6,146.1 392.7,133.2 392.8,121.3 392.9,110.4 393.1,100.7 393.2,92.3 393.3,85.3 393.4,79.7 393.6,75.6 393.7,73.0 393.8,72.0 393.9,72.6 394.1,74.7 394.2,78.3 394.3,83.5 394.4,90.1 394.6,98.1 394.7,107.4 394.8,117.9 394.9,129.5 395.1,142.1 395.2,155.6 395.3,169.8 395.4,184.6 395.6,199.8 395.7,215.4 395.8,231.0 396.0,246.7 396.1,262.1 396.2,277.3 396.3,291.9 396.5,305.9 396.6,319.2 396.7,331.5 396.8,342.8 397.0,353.0 397.1,361.9 397.2,369.5 397.3,375.7 397.5,380.5 397.6,383.7 397.7,385.3 397.8,385.5 398.0,384.0 398.1,381.0 398.2,376.4 398.3,370.4 398.5,363.0 398.6,354.3 398.7,344.2 398.8,333.1 399.0,320.8 399.1,307.7 399.2,293.8 399.4,279.2 399.5,264.2 399.6,248.7 399.7,233.1 399.9,217.4 400.0,201.9 400.1,186.6 400.2,171.7 400.4,157.4 400.5,143.8 400.6,131.1 400.7,119.4 400.9,108.7 401.0,99.2 401.1,91.1 401.2,84.3 401.4,78.9 401.5,75.1 401.6,72.8 401.7,72.0 401.9,72.8 402.0,75.2 402.1,79.1 402.2,84.5 402.4,91.3 402.5,99.5 402.6,109.1 402.8,119.8 402.9,131.6 403.0,144.3 403.1,157.9 403.3,172.2 403.4,187.1 403.5,202.4 403.6,218.0 403.8,233.7 403.9,249.3 404.0,264.7 404.1,279.8 404.3,294.3 404.4,308.2 404.5,321.3 404.6,333.5 404.8,344.6 404.9,354.6 405.0,363.3 405.1,370.7 405.3,376.6 405.4,381.1 405.5,384.1 405.7,385.5 405.8,385.3 405.9,383.6 406.0,380.3 406.2,375.5 406.3,369.3 406.4,361.6 406.5,352.7 406.7,342.4 406.8,331.1 406.9,318.7 407.0,305.4 407.2,291.4 407.3,276.7 407.4,261.6 407.5,246.1 407.7,230.5 407.8,214.8 407.9,199.3 408.0,184.1 408.2,169.3 408.3,155.1 408.4,141.6 408.5,129.1 408.7,117.5 408.8,107.0 408.9,97.8 409.1,89.8 409.2,83.3 409.3,78.2 409.4,74.6 409.6,72.5 409.7,72.0 409.8,73.1 409.9,75.7 410.1,79.9 410.2,85.5 410.3,92.6 410.4,101.1 410.6,110.8 410.7,121.7 410.8,133.6 410.9,146.6 411.1,160.3 411.2,174.7 411.3,189.7 411.4,205.0 411.6,220.6 411.7,236.3 411.8,251.9 411.9,267.3 412.1,282.2 412.2,296.7 412.3,310.5 412.5,323.4 412.6,335.4 412.7,346.4 412.8,356.1 413.0,364.6 413.1,371.8 413.2,377.5 413.3,381.7 413.5,384.4 413.6,385.6 413.7,385.1 413.8,383.1 414.0,379.6 414.1,374.6 414.2,368.1 414.3,360.2 414.5,351.0 414.6,340.6 414.7,329.1 414.8,316.5 415.0,303.1 415.1,289.0 415.2,274.2 415.3,259.0 415.5,243.5 415.6,227.8 415.7,212.2 415.9,196.7 416.0,181.5 416.1,166.8 416.2,152.8 416.4,139.5 416.5,127.0 416.6,115.6 416.7,105.4 416.9,96.3 417.0,88.6 417.1,82.3 417.2,77.5 417.4,74.1 417.5,72.3 417.6,72.1 417.7,73.4 417.9,76.3 418.0,80.7 418.1,86.6 418.2,93.9 418.4,102.6 418.5,112.5 418.6,123.6 418.7,135.7 418.9,148.8 419.0,162.7 419.1,177.2 419.3,192.2 419.4,207.6 419.5,223.3 419.6,238.9 419.8,254.5 419.9,269.8 420.0,284.7 420.1,299.1 420.3,312.7 420.4,325.5 420.5,337.3 420.6,348.1 420.8,357.7 420.9,365.9 421.0,372.8 421.1,378.3 421.3,382.3 421.4,384.7 421.5,385.6 421.6,384.9 421.8,382.7 421.9,378.9 422.0,373.6 422.1,366.9 422.3,358.8 422.4,349.3 422.5,338.7 422.7,327.0 422.8,314.3 422.9,300.8 423.0,286.5 423.2,271.7 423.3,256.4 423.4,240.9 423.5,225.2 423.7,209.6 423.8,194.1 423.9,179.0 424.0,164.4 424.2,150.5 424.3,137.3 424.4,125.1 424.5,113.8 424.7,103.8 424.8,94.9 424.9,87.5 425.0,81.4 425.2,76.8 425.3,73.7 425.4,72.2 425.5,72.2 425.7,73.8 425.8,77.0 425.9,81.6 426.1,87.8 426.2,95.3 426.3,104.2 426.4,114.3 426.6,125.6 426.7,137.9 426.8,151.1 426.9,165.1 427.1,179.7 427.2,194.8 427.3,210.3 427.4,225.9 427.6,241.6 427.7,257.1 427.8,272.3 427.9,287.2 428.1,301.4 428.2,314.9 428.3,327.6 428.4,339.2 428.6,349.8 428.7,359.1 428.8,367.2 428.9,373.9 429.1,379.1 429.2,382.8 429.3,385.0 429.5,385.6 429.6,384.6 429.7,382.1 429.8,378.1 430.0,372.6 430.1,365.6 430.2,357.3 430.3,347.6 430.5,336.8 430.6,325.0 430.7,312.1 430.8,298.4 431.0,284.1 431.1,269.1 431.2,253.8 431.3,238.2 431.5,222.6 431.6,206.9 431.7,191.6 431.8,176.5 432.0,162.0 432.1,148.2 432.2,135.2 432.3,123.1 432.5,112.1 432.6,102.2 432.7,93.6 432.9,86.3 433.0,80.5 433.1,76.2 433.2,73.3 433.4,72.1 433.5,72.4 433.6,74.2 433.7,77.6 433.9,82.6 434.0,88.9 434.1,96.7 434.2,105.8 434.4,116.1 434.5,127.6 434.6,140.0 434.7,153.4 434.9,167.5 435.0,182.2 435.1,197.4 435.2,212.9 435.4,228.5 435.5,244.2 435.6,259.7 435.7,274.9 435.9,289.6 436.0,303.7 436.1,317.1 436.3,329.6 436.4,341.1 436.5,351.5 436.6,360.6 436.8,368.4 436.9,374.8 437.0,379.8 437.1,383.3 437.3,385.2 437.4,385.5 437.5,384.3 437.6,381.6 437.8,377.3 437.9,371.5 438.0,364.3 438.1,355.7 438.3,345.9 438.4,334.9 438.5,322.9 438.6,309.9 438.8,296.1 438.9,281.6 439.0,266.6 439.1,251.2 439.3,235.6 439.4,219.9 439.5,204.3 439.7,189.0 439.8,174.1 439.9,159.7 440.0,146.0 440.2,133.1 440.3,121.2 440.4,110.3 440.5,100.7 440.7,92.3 440.8,85.3 440.9,79.7 441.0,75.6 441.2,73.0 441.3,72.0 441.4,72.6 441.5,74.7 441.7,78.4 441.8,83.5 441.9,90.1 442.0,98.1 442.2,107.5 442.3,118.0 442.4,129.6 442.5,142.2 442.7,155.7 442.8,169.9 442.9,184.7 443.1,200.0 443.2,215.5 443.3,231.2 443.4,246.8 443.6,262.3 443.7,277.4 443.8,292.0 443.9,306.0 444.1,319.3 444.2,331.6 444.3,342.9 444.4,353.1 444.6,362.0 444.7,369.6 444.8,375.8 444.9,380.5 445.1,383.7 445.2,385.4 445.3,385.4 445.4,384.0 445.6,380.9 445.7,376.4 445.8,370.4 445.9,362.9 446.1,354.2 446.2,344.1 446.3,333.0 446.5,320.7 446.6,307.6 446.7,293.7 446.8,279.1 447.0,264.0 447.1,248.6 447.2,233.0 447.3,217.3 447.5,201.7 447.6,186.5 447.7,171.6 447.8,157.3 448.0,143.7 448.1,131.0 448.2,119.3 448.3,108.6 448.5,99.2 448.6,91.0 448.7,84.2 448.8,78.9 449.0,75.0 449.1,72.7 449.2,72.0 449.4,72.8 449.5,75.2 449.6,79.1 449.7,84.5 449.9,91.4 450.0,99.6 450.1,109.1 450.2,119.9 450.4,131.7 450.5,144.4 450.6,158.1 450.7,172.4 450.9,187.3 451.0,202.6 451.1,218.1 451.2,233.8 451.4,249.4 451.5,264.8 451.6,279.9 451.7,294.4 451.9,308.3 452.0,321.4 452.1,333.6 452.2,344.7 452.4,354.7 452.5,363.4 452.6,370.7 452.8,376.7 452.9,381.1 453.0,384.1 453.1,385.5 453.3,385.3 453.4,383.6 453.5,380.3 453.6,375.5 453.8,369.2 453.9,361.6 454.0,352.6 454.1,342.3 454.3,331.0 454.4,318.6 454.5,305.3 454.6,291.3 454.8,276.6 454.9,261.4 455.0,246.0 455.1,230.3 455.3,214.7 455.4,199.1 455.5,183.9 455.6,169.1 455.8,155.0 455.9,141.5 456.0,129.0 456.2,117.4 456.3,106.9 456.4,97.7 456.5,89.8 456.7,83.2 456.8,78.1 456.9,74.5 457.0,72.5 457.2,72.0 457.3,73.1 457.4,75.8 457.5,79.9 457.7,85.6 457.8,92.7 457.9,101.1 458.0,110.9 458.2,121.8 458.3,133.7 458.4,146.7 458.5,160.4 458.7,174.8 458.8,189.8 458.9,205.2 459.0,220.8 459.2,236.4 459.3,252.0 459.4,267.4 459.6,282.4 459.7,296.8 459.8,310.6 459.9,323.5 460.1,335.5 460.2,346.5 460.3,356.2 460.4,364.7 460.6,371.8 460.7,377.5 460.8,381.7 460.9,384.4 461.1,385.6 461.2,385.1 461.3,383.1 461.4,379.6 461.6,374.5 461.7,368.0 461.8,360.1 461.9,350.9 462.1,340.5 462.2,329.0 462.3,316.4 462.4,303.0 462.6,288.8 462.7,274.1 462.8,258.9 463.0,243.3 463.1,227.7 463.2,212.0 463.3,196.6 463.5,181.4 463.6,166.7 463.7,152.7 463.8,139.3 464.0,126.9 464.1,115.5 464.2,105.3 464.3,96.3 464.5,88.6 464.6,82.3 464.7,77.4 464.8,74.1 465.0,72.3 465.1,72.1 465.2,73.5 465.3,76.4 465.5,80.8 465.6,86.7 465.7,94.0 465.8,102.7 466.0,112.6 466.1,123.7 466.2,135.9 466.4,148.9 466.5,162.8 466.6,177.3 466.7,192.4 466.9,207.8 467.0,223.4 467.1,239.1 467.2,254.6 467.4,269.9 467.5,284.8 467.6,299.2 467.7,312.8 467.9,325.6 468.0,337.4 468.1,348.2 468.2,357.7 468.4,366.0 468.5,372.9 468.6,378.3 468.7,382.3 468.9,384.7 469.0,385.6 469.1,384.9 469.2,382.6 469.4,378.8 469.5,373.5 469.6,366.8 469.8,358.7 469.9,349.3 470.0,338.6 470.1,326.9 470.3,314.2 470.4,300.7 470.5,286.4 470.6,271.5 470.8,256.3 470.9,240.7 471.0,225.0 471.1,209.4 471.3,194.0 471.4,178.9 471.5,164.3 471.6,150.4 471.8,137.2 471.9,124.9 472.0,113.7 472.1,103.7 472.3,94.9 472.4,87.4 472.5,81.3 472.6,76.8 472.8,73.7 472.9,72.2 473.0,72.2 473.2,73.8 473.3,77.0 473.4,81.7 473.5,87.8 473.7,95.4 473.8,104.3 473.9,114.4 474.0,125.7 474.2,138.0 474.3,151.2 474.4,165.2 474.5,179.8 474.7,194.9 474.8,210.4 474.9,226.0 475.0,241.7 475.2,257.2 475.3,272.5 475.4,287.3 475.5,301.5 475.7,315.0 475.8,327.7 475.9,339.3 476.0,349.9 476.2,359.2 476.3,367.3 476.4,373.9 476.6,379.1 476.7,382.8 476.8,385.0 476.9,385.6 477.1,384.6 477.2,382.1 477.3,378.1 477.4,372.5 477.6,365.5 477.7,357.2 477.8,347.6 477.9,336.7 478.1,324.8 478.2,312.0 478.3,298.3 478.4,283.9 478.6,269.0 478.7,253.7 478.8,238.1 478.9,222.4 479.1,206.8 479.2,191.4 479.3,176.4 479.4,161.9 479.6,148.1 479.7,135.1 479.8,123.0 480.0,112.0 480.1,102.1 480.2,93.5 480.3,86.3 480.5,80.5 480.6,76.1 480.7,73.3 480.8,72.1 481.0,72.4 481.1,74.3 481.2,77.7 481.3,82.6 481.5,89.0 481.6,96.8 481.7,105.9 481.8,116.2 482.0,127.7 482.1,140.2 482.2,153.5 482.3,167.6 482.5,182.3 482.6,197.5 482.7,213.0 482.8,228.7 483.0,244.3 483.1,259.8 483.2,275.0 483.4,289.7 483.5,303.9 483.6,317.2 483.7,329.7 483.9,341.2 484.0,351.5 484.1,360.7 484.2,368.5 484.4,374.9 484.5,379.8 484.6,383.3 484.7,385.2 484.9,385.5 485.0,384.3 485.1,381.5 485.2,377.2 485.4,371.4 485.5,364.2 485.6,355.7 485.7,345.8 485.9,334.8 486.0,322.7 486.1,309.7 486.2,295.9 486.4,281.5 486.5,266.4 486.6,251.1 486.8,235.5 486.9,219.8 487.0,204.2 487.1,188.9 487.3,173.9 487.4,159.5 487.5,145.8 487.6,133.0 487.8,121.1 487.9,110.2 488.0,100.6 488.1,92.2 488.3,85.2 488.4,79.6 488.5,75.6 488.6,73.0 488.8,72.0 488.9,72.6 489.0,74.7 489.1,78.4 489.3,83.6 489.4,90.2 489.5,98.2 489.7,107.5 489.8,118.1 489.9,129.7 490.0,142.3 490.2,155.8 490.3,170.1 490.4,184.9 490.5,200.1 490.7,215.6 490.8,231.3 490.9,246.9 491.0,262.4 491.2,277.5 491.3,292.2 491.4,306.2 491.5,319.4 491.7,331.7 491.8,343.0 491.9,353.2 492.0,362.1 492.2,369.7 492.3,375.8 492.4,380.5 492.5,383.7 492.7,385.4 492.8,385.4 492.9,384.0 493.1,380.9 493.2,376.4 493.3,370.3 493.4,362.9 493.6,354.1 493.7,344.0 493.8,332.9 493.9,320.6 494.1,307.5 494.2,293.5 494.3,279.0 494.4,263.9 494.6,248.4 494.7,232.8 494.8,217.2 494.9,201.6 495.1,186.3 495.2,171.5 495.3,157.2 495.4,143.6 495.6,130.9 495.7,119.2 495.8,108.5 495.9,99.1 496.1,90.9 496.2,84.2 496.3,78.8 496.5,75.0 496.6,72.7 496.7,72.0 496.8,72.8 497.0,75.2 497.1,79.2 497.2,84.6 497.3,91.5 497.5,99.7 497.6,109.2 497.7,120.0 497.8,131.8 498.0,144.6 498.1,158.2 498.2,172.5 498.3,187.4 498.5,202.7 498.6,218.3 498.7,233.9 498.8,249.6 499.0,265.0 499.1,280.0 499.2,294.6 499.3,308.4 499.5,321.5 499.6,333.7 499.7,344.8 499.9,354.8 500.0,363.4 500.1,370.8 500.2,376.7 500.4,381.2 500.5,384.1 500.6,385.5 500.7,385.3 500.9,383.5 501.0,380.3 501.1,375.4 501.2,369.2 501.4,361.5 501.5,352.5 501.6,342.2 501.7,330.9 501.9,318.5 502.0,305.2 502.1,291.1 502.2,276.5 502.4,261.3 502.5,245.8 502.6,230.2 502.7,214.5 502.9,199.0 503.0,183.8 503.1,169.0 503.3,154.8 503.4,141.4 503.5,128.8 503.6,117.3 503.8,106.8 503.9,97.6 504.0,89.7 504.1,83.2 504.3,78.1 504.4,74.5 504.5,72.5 504.6,72.0 504.8,73.1 504.9,75.8 505.0,80.0 505.1,85.7 505.3,92.8 505.4,101.2 505.5,111.0 505.6,121.9 505.8,133.9 505.9,146.8 506.0,160.5 506.1,175.0 506.3,189.9 506.4,205.3 506.5,220.9 506.7,236.6 506.8,252.2 506.9,267.5 507.0,282.5 507.2,296.9 507.3,310.7 507.4,323.6 507.5,335.6 507.7,346.6 507.8,356.3 507.9,364.8 508.0,371.9 508.2,377.6 508.3,381.8 508.4,384.4 508.5,385.6 508.7,385.1 508.8,383.1 508.9,379.5 509.0,374.5 509.2,368.0 509.3,360.1 509.4,350.8 509.5,340.4 509.7,328.9 509.8,316.3 509.9,302.9 510.1,288.7 510.2,273.9 510.3,258.7 510.4,243.2 510.6,227.5 510.7,211.9 510.8,196.4 510.9,181.3 511.1,166.6 511.2,152.5 511.3,139.2 511.4,126.8 511.6,115.4 511.7,105.2 511.8,96.2 511.9,88.5 512.1,82.2 512.2,77.4 512.3,74.1 512.4,72.3 512.6,72.1 512.7,73.5 512.8,76.4 512.9,80.8 513.1,86.7 513.2,94.1 513.3,102.8 513.5,112.7 513.6,123.8 513.7,136.0 513.8,149.0 514.0,162.9 514.1,177.5 514.2,192.5 514.3,207.9 514.5,223.5 514.6,239.2 514.7,254.8 514.8,270.1 515.0,285.0 515.1,299.3 515.2,312.9 515.3,325.7 515.5,337.5 515.6,348.3 515.7,357.8 515.8,366.1 516.0,373.0 516.1,378.4 516.2,382.3 516.3,384.7 516.5,385.6 516.6,384.9 516.7,382.6 516.9,378.8 517.0,373.5 517.1,366.7 517.2,358.6 517.4,349.2 517.5,338.5 517.6,326.8 517.7,314.1 517.9,300.5 518.0,286.3 518.1,271.4 518.2,256.1 518.4,240.6 518.5,224.9 518.6,209.3 518.7,193.8 518.9,178.8 519.0,164.2 519.1,150.2 519.2,137.1 519.4,124.8 519.5,113.6 519.6,103.6 519.7,94.8 519.9,87.3 520.0,81.3 520.1,76.7 520.3,73.7 520.4,72.2 520.5,72.2 520.6,73.9 520.8,77.0 520.9,81.7 521.0,87.9 521.1,95.5 521.3,104.4 521.4,114.5 521.5,125.8 521.6,138.1 521.8,151.3 521.9,165.3 522.0,180.0 522.1,195.1 522.3,210.5 522.4,226.2 522.5,241.8 522.6,257.4 522.8,272.6 522.9,287.4 523.0,301.7 523.1,315.2 523.3,327.8 523.4,339.4 523.5,350.0 523.7,359.3 523.8,367.3 523.9,374.0 524.0,379.2 524.2,382.8 524.3,385.0 524.4,385.6 524.5,384.6 524.7,382.1 524.8,378.0 524.9,372.5 525.0,365.5 525.2,357.1 525.3,347.5 525.4,336.6 525.5,324.7 525.7,311.9 525.8,298.2 525.9,283.8 526.0,268.9 526.2,253.5 526.3,237.9 526.4,222.3 526.5,206.7 526.7,191.3 526.8,176.3 526.9,161.8 527.1,148.0 527.2,135.0 527.3,122.9 527.4,111.9 527.6,102.0 527.7,93.4 527.8,86.2 527.9,80.4 528.1,76.1 528.2,73.3 528.3,72.1 528.4,72.4 528.6,74.3 528.7,77.7 528.8,82.7 528.9,89.1 529.1,96.9 529.2,106.0 529.3,116.3 529.4,127.8 529.6,140.3 529.7,153.6 529.8,167.7 530.0,182.5 530.1,197.7 530.2,213.2 530.3,228.8 530.5,244.5 530.6,260.0 530.7,275.1 530.8,289.9 531.0,304.0 531.1,317.3 531.2,329.8 531.3,341.3 531.5,351.6 531.6,360.7 531.7,368.5 531.8,374.9 532.0,379.9 532.1,383.3 532.2,385.2 532.3,385.5 532.5,384.3 532.6,381.5 532.7,377.2 532.8,371.4 533.0,364.1 533.1,355.6 533.2,345.7 533.4,334.7 533.5,322.6 533.6,309.6 533.7,295.8 533.9,281.3 534.0,266.3 534.1,250.9 534.2,235.3 534.4,219.6 534.5,204.1 534.6,188.7 534.7,173.8 534.9,159.4 535.0,145.7 535.1,132.9 535.2,121.0 535.4,110.1 535.5,100.5 535.6,92.1 535.7,85.1 535.9,79.6 536.0,75.5 536.1,73.0 536.2,72.0 536.4,72.6 536.5,74.8 536.6,78.4 536.8,83.6 536.9,90.3 537.0,98.3 537.1,107.6 537.3,118.2 537.4,129.8 537.5,142.5 537.6,156.0 537.8,170.2 537.9,185.0 538.0,200.2 538.1,215.8 538.3,231.4 538.4,247.1 538.5,262.5 538.6,277.7 538.8,292.3 538.9,306.3 539.0,319.5 539.1,331.8 539.3,343.1 539.4,353.2 539.5,362.2 539.6,369.7 539.8,375.9 539.9,380.6 540.0,383.7 540.2,385.4 540.3,385.4 540.4,383.9 540.5,380.9 540.7,376.3 540.8,370.3 540.9,362.8 541.0,354.0 541.2,344.0 541.3,332.8 541.4,320.5 541.5,307.4 541.7,293.4 541.8,278.8 541.9,263.7 542.0,248.3 542.2,232.7 542.3,217.0 542.4,201.5 542.5,186.2 542.7,171.3 542.8,157.1 542.9,143.5 543.0,130.8 543.2,119.1 543.3,108.4 543.4,99.0 543.6,90.9 543.7,84.1 543.8,78.8 543.9,75.0 544.1,72.7 544.2,72.0 544.3,72.9 544.4,75.3 544.6,79.2 544.7,84.7 544.8,91.5 544.9,99.8 545.1,109.3 545.2,120.1 545.3,131.9 545.4,144.7 545.6,158.3 545.7,172.6 545.8,187.5 545.9,202.8 546.1,218.4 546.2,234.1 546.3,249.7 546.4,265.1 546.6,280.2 546.7,294.7 546.8,308.6 547.0,321.6 547.1,333.8 547.2,344.9 547.3,354.8 547.5,363.5 547.6,370.9 547.7,376.8 547.8,381.2 548.0,384.1 548.1,385.5 548.2,385.3 548.3,383.5 548.5,380.2 548.6,375.4 548.7,369.1 548.8,361.4 549.0,352.4 549.1,342.1 549.2,330.8 549.3,318.4 549.5,305.1 549.6,291.0 549.7,276.3 549.8,261.2 550.0,245.7 550.1,230.0 550.2,214.4 550.4,198.9 550.5,183.7 550.6,168.9 550.7,154.7 550.9,141.3 551.0,128.7 551.1,117.2 551.2,106.8 551.4,97.5 551.5,89.6 551.6,83.1 551.7,78.1 551.9,74.5 552.0,72.5 552.1,72.0 552.2,73.2 552.4,75.8 552.5,80.0 552.6,85.7 552.7,92.8 552.9,101.3 553.0,111.0 553.1,122.0 553.2,134.0 553.4,146.9 553.5,160.7 553.6,175.1 553.8,190.1 553.9,205.4 554.0,221.0 554.1,236.7 554.3,252.3 554.4,267.7 554.5,282.6 554.6,297.1 554.8,310.8 554.9,323.8 555.0,335.7 555.1,346.6 555.3,356.4 555.4,364.8 555.5,372.0 555.6,377.6 555.8,381.8 555.9,384.5 556.0,385.6 556.1,385.1 556.3,383.1 556.4,379.5 556.5,374.4 556.6,367.9 556.8,360.0 556.9,350.8 557.0,340.3 557.2,328.7 557.3,316.2 557.4,302.7 557.5,288.6 557.7,273.8 557.8,258.6 557.9,243.1 558.0,227.4 558.2,211.8 558.3,196.3 558.4,181.1 558.5,166.5 558.7,152.4 558.8,139.1 558.9,126.7 559.0,115.4 559.2,105.1 559.3,96.1 559.4,88.4 559.5,82.2 559.7,77.3 559.8,74.1 559.9,72.3 560.0,72.1 560.2,73.5 560.3,76.4 560.4,80.9 560.6,86.8 560.7,94.2 560.8,102.9 560.9,112.8 561.1,123.9 561.2,136.1 561.3,149.2 561.4,163.0 561.6,177.6 561.7,192.6 561.8,208.1 561.9,223.7 562.1,239.3 562.2,254.9 562.3,270.2 562.4,285.1 562.6,299.4 562.7,313.1 562.8,325.8 562.9,337.6 563.1,348.4 563.2,357.9 563.3,366.1 563.4,373.0 563.6,378.4 563.7,382.4 563.8,384.8 564.0,385.6 564.1,384.9 564.2,382.6 564.3,378.8 564.5,373.4 564.6,366.7 564.7,358.5 564.8,349.1 565.0,338.4 565.1,326.7 565.2,314.0 565.3,300.4 565.5,286.1 565.6,271.3 565.7,256.0 565.8,240.4 566.0,224.8 566.1,209.1 566.2,193.7 566.3,178.6 566.5,164.0 566.6,150.1 566.7,137.0 566.8,124.7 567.0,113.5 567.1,103.5 567.2,94.7 567.4,87.3 567.5,81.2 567.6,76.7 567.7,73.6 567.9,72.2 568.0,72.2 568.1,73.9 568.2,77.1 568.4,81.8 568.5,87.9 568.6,95.5 568.7,104.4 568.9,114.6 569.0,125.9 569.1,138.2 569.2,151.4 569.4,165.5 569.5,180.1 569.6,195.2 569.7,210.7 569.9,226.3 570.0,242.0 570.1,257.5 570.3,272.8 570.4,287.6 570.5,301.8 570.6,315.3 570.8,327.9 570.9,339.5 571.0,350.1 571.1,359.4 571.3,367.4 571.4,374.0 571.5,379.2 571.6,382.9 571.8,385.0 571.9,385.6 572.0,384.6 572.1,382.0 572.3,378.0 572.4,372.4 572.5,365.4 572.6,357.0 572.8,347.4 572.9,336.5 573.0,324.6 573.1,311.8 573.3,298.1 573.4,283.7 573.5,268.7 573.7,253.4 573.8,237.8 573.9,222.1 574.0,206.5 574.2,191.1 574.3,176.1 574.4,161.7 574.5,147.8 574.7,134.8 574.8,122.8 574.9,111.8 575.0,101.9 575.2,93.4 575.3,86.2 575.4,80.4 575.5,76.1 575.7,73.3 575.8,72.1 575.9,72.4 576.0,74.3 576.2,77.8 576.3,82.7 576.4,89.1 576.5,96.9 576.7,106.1 576.8,116.4 576.9,127.9 577.1,140.4 577.2,153.8 577.3,167.9 577.4,182.6 577.6,197.8 577.7,213.3 577.8,228.9 577.9,244.6 578.1,260.1 578.2,275.3 578.3,290.0 578.4,304.1 578.6,317.5 578.7,329.9 578.8,341.4 578.9,351.7 579.1,360.8 579.2,368.6 579.3,375.0 579.4,379.9 579.6,383.3 579.7,385.2 579.8,385.5 579.9,384.3 580.1,381.5 580.2,377.1 580.3,371.3 580.5,364.1 580.6,355.5 580.7,345.6 580.8,334.6 581.0,322.5 581.1,309.5 581.2,295.7 581.3,281.2 581.5,266.2 581.6,250.8 581.7,235.2 581.8,219.5 582.0,203.9 582.1,188.6 582.2,173.7 582.3,159.3 582.5,145.6 582.6,132.7 582.7,120.9 582.8,110.0 583.0,100.4 583.1,92.1 583.2,85.1 583.3,79.5 583.5,75.5 583.6,73.0 583.7,72.0 583.9,72.6 584.0,74.8 584.1,78.5 584.2,83.7 584.4,90.3 584.5,98.4 584.6,107.7 584.7,118.3 584.9,129.9 585.0,142.6 585.1,156.1 585.2,170.3 585.4,185.1 585.5,200.4 585.6,215.9 585.7,231.6 585.9,247.2 586.0,262.7 586.1,277.8 586.2,292.4 586.4,306.4 586.5,319.6 586.6,331.9 586.7,343.2 586.9,353.3 587.0,362.2"/>
<polyline stroke="#008000" points="83.2,213.1 83.4,212.5 83.5,212.1 83.6,211.8 83.8,211.8 83.9,212.0 84.0,212.4 84.1,213.1 84.3,214.0 84.4,215.2 84.5,216.6 84.6,218.3 84.8,220.1 84.9,222.2 85.0,224.5 85.1,227.0 85.3,229.6 85.4,232.3 85.5,235.1 85.6,238.0 85.8,240.9 85.9,243.8 86.0,246.7 86.1,249.5 86.3,252.1 86.4,254.6 86.5,257.0 86.7,259.1 86.8,260.9 86.9,262.5 87.0,263.8 87.2,264.7 87.3,265.3 87.4,265.5 87.5,265.3 87.7,264.7 87.8,263.7 87.9,262.3 88.0,260.5 88.2,258.3 88.3,255.8 88.4,252.8 88.5,249.6 88.7,246.0 88.8,242.2 88.9,238.1 89.0,233.8 89.2,229.4 89.3,224.8 89.4,220.2 89.5,215.5 89.7,210.9 89.8,206.3 89.9,201.9 90.1,197.7 90.2,193.6 90.3,189.9 90.4,186.5 90.6,183.5 90.7,180.8 90.8,178.6 90.9,176.9 91.1,175.7 91.2,175.0 91.3,174.8 91.4,175.2 91.6,176.2 91.7,177.7 91.8,179.8 91.9,182.4 92.1,185.6 92.2,189.2 92.3,193.3 92.4,197.8 92.6,202.8 92.7,208.1 92.8,213.7 92.9,219.5 93.1,225.5 93.2,231.6 93.3,237.9 93.5,244.1 93.6,250.2 93.7,256.2 93.8,262.1 94.0,267.7 94.1,272.9 94.2,277.8 94.3,282.3 94.5,286.2 94.6,289.7 94.7,292.6 94.8,294.8 95.0,296.4 95.1,297.4 95.2,297.6 95.3,297.2 95.5,296.1 95.6,294.3 95.7,291.7 95.8,288.5 96.0,284.7 96.1,280.3 96.2,275.2 96.3,269.7 96.5,263.7 96.6,257.2 96.7,250.4 96.9,243.3 97.0,236.0 97.1,228.5 97.2,220.9 97.4,213.3 97.5,205.8 97.6,198.5 97.7,191.4 97.9,184.6 98.0,178.2 98.1,172.2 98.2,166.7 98.4,161.8 98.5,157.6 98.6,154.0 98.7,151.1 98.9,149.0 99.0,147.7 99.1,147.2 99.2,147.5 99.4,148.6 99.5,150.6 99.6,153.4 99.7,156.9 99.9,161.2 100.0,166.2 100.1,171.9 100.3,178.3 100.4,185.1 100.5,192.5 100.6,200.3 100.8,208.5 100.9,216.9 101.0,225.6 101.1,234.3 101.3,243.0 101.4,251.7 101.5,260.2 101.6,268.4 101.8,276.4 101.9,283.9 102.0,290.9 102.1,297.3 102.3,303.1 102.4,308.1 102.5,312.5 102.6,316.0 102.8,318.6 102.9,320.4 103.0,321.2 103.1,321.2 103.3,320.2 103.4,318.2 103.5,315.4 103.7,311.7 103.8,307.1 103.9,301.7 104.0,295.5 104.2,288.6 104.3,281.1 104.4,273.0 104.5,264.4 104.7,255.3 104.8,246.0 104.9,236.4 105.0,226.7 105.2,217.0 105.3,207.3 105.4,197.8 105.5,188.5 105.7,179.6 105.8,171.1 105.9,163.1 106.0,155.8 106.2,149.2 106.3,143.3 106.4,138.2 106.5,134.1 106.7,130.8 106.8,128.5 106.9,127.3 107.1,127.0 107.2,127.7 107.3,129.5 107.4,132.3 107.6,136.0 107.7,140.8 107.8,146.4 107.9,152.9 108.1,160.1 108.2,168.1 108.3,176.8 108.4,186.0 108.6,195.7 108.7,205.8 108.8,216.1 108.9,226.6 109.1,237.2 109.2,247.8 109.3,258.2 109.4,268.4 109.6,278.3 109.7,287.6 109.8,296.5 109.9,304.7 110.1,312.1 110.2,318.8 110.3,324.6 110.5,329.5 110.6,333.3 110.7,336.2 110.8,337.9 111.0,338.6 111.1,338.2 111.2,336.7 111.3,334.1 111.5,330.4 111.6,325.7 111.7,320.0 111.8,313.4 112.0,305.9 112.1,297.6 112.2,288.5 112.3,278.9 112.5,268.7 112.6,258.0 112.7,247.0 112.8,235.8 113.0,224.5 113.1,213.2 113.2,201.9 113.3,191.0 113.5,180.3 113.6,170.1 113.7,160.5 113.9,151.5 114.0,143.2 114.1,135.8 114.2,129.3 114.4,123.7 114.5,119.2 114.6,115.8 114.7,113.5 114.9,112.3 115.0,112.3 115.1,113.5 115.2,115.8 115.4,119.3 115.5,123.8 115.6,129.5 115.7,136.1 115.9,143.8 116.0,152.2 116.1,161.5 116.2,171.5 116.4,182.1 116.5,193.2 116.6,204.7 116.7,216.5 116.9,228.4 117.0,240.3 117.1,252.2 117.3,263.9 117.4,275.3 117.5,286.2 117.6,296.6 117.8,306.4 117.9,315.4 118.0,323.5 118.1,330.8 118.3,337.0 118.4,342.2 118.5,346.2 118.6,349.1 118.8,350.8 118.9,351.3 119.0,350.5 119.1,348.5 119.3,345.4 119.4,341.0 119.5,335.5 119.6,328.9 119.8,321.3 119.9,312.8 120.0,303.4 120.1,293.2 120.3,282.3 120.4,270.9 120.5,259.1 120.7,246.9 120.8,234.4 120.9,221.9 121.0,209.5 121.2,197.2 121.3,185.1 121.4,173.5 121.5,162.5 121.7,152.0 121.8,142.3 121.9,133.4 122.0,125.5 122.2,118.6 122.3,112.8 122.4,108.1 122.5,104.6 122.7,102.4 122.8,101.4 122.9,101.7 123.0,103.2 123.2,106.0 123.3,110.1 123.4,115.4 123.6,121.8 123.7,129.3 123.8,137.8 123.9,147.2 124.1,157.5 124.2,168.5 124.3,180.1 124.4,192.2 124.6,204.8 124.7,217.6 124.8,230.5 124.9,243.5 125.1,256.3 125.2,268.9 125.3,281.1 125.4,292.8 125.6,303.9 125.7,314.3 125.8,323.8 125.9,332.4 126.1,340.0 126.2,346.5 126.3,351.8 126.4,355.9 126.6,358.7 126.7,360.2 126.8,360.5 127.0,359.4 127.1,357.0 127.2,353.3 127.3,348.3 127.5,342.2 127.6,334.9 127.7,326.5 127.8,317.2 128.0,306.9 128.1,295.8 128.2,284.1 128.3,271.8 128.5,259.0 128.6,245.9 128.7,232.6 128.8,219.2 129.0,205.9 129.1,192.9 129.2,180.1 129.3,167.8 129.5,156.2 129.6,145.2 129.7,135.0 129.8,125.8 130.0,117.5 130.1,110.4 130.2,104.5 130.4,99.7 130.5,96.3 130.6,94.2 130.7,93.4 130.9,94.0 131.0,95.9 131.1,99.2 131.2,103.8 131.4,109.6 131.5,116.6 131.6,124.8 131.7,134.0 131.9,144.2 132.0,155.2 132.1,167.0 132.2,179.4 132.4,192.3 132.5,205.7 132.6,219.2 132.7,232.9 132.9,246.6 133.0,260.1 133.1,273.3 133.2,286.1 133.4,298.3 133.5,309.9 133.6,320.6 133.8,330.5 133.9,339.3 134.0,347.1 134.1,353.7 134.3,359.0 134.4,363.1 134.5,365.8 134.6,367.1 134.8,367.1 134.9,365.7 135.0,362.9 135.1,358.7 135.3,353.3 135.4,346.6 135.5,338.7 135.6,329.7 135.8,319.7 135.9,308.8 136.0,297.1 136.1,284.6 136.3,271.6 136.4,258.1 136.5,244.4 136.6,230.4 136.8,216.4 136.9,202.6 137.0,188.9 137.2,175.7 137.3,163.0 137.4,150.9 137.5,139.6 137.7,129.1 137.8,119.7 137.9,111.3 138.0,104.1 138.2,98.1 138.3,93.5 138.4,90.1 138.5,88.2 138.7,87.7 138.8,88.5 138.9,90.8 139.0,94.5 139.2,99.5 139.3,105.8 139.4,113.3 139.5,122.1 139.7,131.8 139.8,142.6 139.9,154.2 140.0,166.6 140.2,179.7 140.3,193.2 140.4,207.1 140.6,221.2 140.7,235.5 140.8,249.6 140.9,263.6 141.1,277.3 141.2,290.5 141.3,303.0 141.4,314.9 141.6,325.9 141.7,335.9 141.8,344.9 141.9,352.7 142.1,359.3 142.2,364.6 142.3,368.5 142.4,371.0 142.6,372.2 142.7,371.9 142.8,370.1 142.9,367.0 143.1,362.4 143.2,356.6 143.3,349.4 143.4,341.0 143.6,331.5 143.7,321.0 143.8,309.5 144.0,297.2 144.1,284.2 144.2,270.7 144.3,256.7 144.5,242.5 144.6,228.0 144.7,213.6 144.8,199.3 145.0,185.3 145.1,171.8 145.2,158.7 145.3,146.4 145.5,134.9 145.6,124.3 145.7,114.8 145.8,106.3 146.0,99.1 146.1,93.2 146.2,88.7 146.3,85.5 146.5,83.8 146.6,83.5 146.7,84.7 146.8,87.3 147.0,91.3 147.1,96.7 147.2,103.4 147.4,111.4 147.5,120.6 147.6,130.9 147.7,142.1 147.9,154.2 148.0,167.1 148.1,180.6 148.2,194.6 148.4,208.9 148.5,223.5 148.6,238.1 148.7,252.6 148.9,267.0 149.0,280.9 149.1,294.3 149.2,307.1 149.4,319.1 149.5,330.2 149.6,340.3 149.7,349.3 149.9,357.1 150.0,363.6 150.1,368.8 150.2,372.6 150.4,374.9 150.5,375.8 150.6,375.2 150.8,373.2 150.9,369.7 151.0,364.8 151.1,358.5 151.3,351.0 151.4,342.2 151.5,332.2 151.6,321.3 151.8,309.4 151.9,296.7 152.0,283.3 152.1,269.3 152.3,254.9 152.4,240.3 152.5,225.5 152.6,210.8 152.8,196.2 152.9,182.0 153.0,168.2 153.1,155.0 153.3,142.5 153.4,130.9 153.5,120.3 153.6,110.7 153.8,102.3 153.9,95.2 154.0,89.4 154.2,85.0 154.3,82.0 154.4,80.5 154.5,80.5 154.7,82.0 154.8,84.9 154.9,89.3 155.0,95.0 155.2,102.2 155.3,110.5 155.4,120.1 155.5,130.7 155.7,142.4 155.8,154.9 155.9,168.2 156.0,182.0 156.2,196.4 156.3,211.0 156.4,225.9 156.5,240.8 156.7,255.6 156.8,270.1 156.9,284.2 157.0,297.8 157.2,310.7 157.3,322.8 157.4,333.9 157.6,344.0 157.7,353.0 157.8,360.7 157.9,367.1 158.1,372.1 158.2,375.7 158.3,377.8 158.4,378.5 158.6,377.6 158.7,375.3 158.8,371.4 158.9,366.2 159.1,359.6 159.2,351.7 159.3,342.5 159.4,332.2 159.6,320.9 159.7,308.6 159.8,295.6 159.9,281.8 160.1,267.5 160.2,252.9 160.3,238.0 160.4,223.0 160.6,208.0 160.7,193.2 160.8,178.8 161.0,164.9 161.1,151.6 161.2,139.1 161.3,127.5 161.5,116.9 161.6,107.4 161.7,99.1 161.8,92.1 162.0,86.4 162.1,82.2 162.2,79.4 162.3,78.2 162.5,78.4 162.6,80.2 162.7,83.4 162.8,88.1 163.0,94.2 163.1,101.6 163.2,110.3 163.3,120.3 163.5,131.2 163.6,143.2 163.7,156.0 163.9,169.6 164.0,183.8 164.1,198.4 164.2,213.3 164.4,228.4 164.5,243.5 164.6,258.4 164.7,273.1 164.9,287.3 165.0,301.0 165.1,313.9 165.2,326.0 165.4,337.1 165.5,347.2 165.6,356.0 165.7,363.6 165.9,369.8 166.0,374.7 166.1,378.1 166.2,380.0 166.4,380.3 166.5,379.2 166.6,376.6 166.7,372.5 166.9,366.9 167.0,360.0 167.1,351.7 167.3,342.2 167.4,331.6 167.5,320.0 167.6,307.4 167.8,294.1 167.9,280.1 168.0,265.5 168.1,250.6 168.3,235.5 168.4,220.3 168.5,205.2 168.6,190.3 168.8,175.8 168.9,161.9 169.0,148.5 169.1,136.0 169.3,124.4 169.4,113.9 169.5,104.5 169.6,96.3 169.8,89.5 169.9,84.0 170.0,80.0 170.1,77.5 170.3,76.5 170.4,77.0 170.5,79.0 170.7,82.5 170.8,87.5 170.9,93.9 171.0,101.7 171.2,110.7 171.3,120.9 171.4,132.2 171.5,144.5 171.7,157.6 171.8,171.4 171.9,185.8 172.0,200.6 172.2,215.7 172.3,231.0 172.4,246.2 172.5,261.3 172.7,276.0 172.8,290.3 172.9,303.9 173.0,316.9 173.2,328.9 173.3,339.9 173.4,349.9 173.5,358.6 173.7,366.0 173.8,372.1 173.9,376.7 174.1,379.9 174.2,381.5 174.3,381.7 174.4,380.3 174.6,377.3 174.7,372.9 174.8,367.1 174.9,359.8 175.1,351.3 175.2,341.5 175.3,330.6 175.4,318.7 175.6,305.9 175.7,292.3 175.8,278.1 175.9,263.4 176.1,248.3 176.2,233.0 176.3,217.7 176.4,202.5 176.6,187.5 176.7,173.0 176.8,159.0 176.9,145.7 177.1,133.2 177.2,121.7 177.3,111.3 177.5,102.0 177.6,94.0 177.7,87.3 177.8,82.1 178.0,78.3 178.1,76.0 178.2,75.3 178.3,76.0 178.5,78.3 178.6,82.1 178.7,87.4 178.8,94.1 179.0,102.1 179.1,111.5 179.2,121.9 179.3,133.5 179.5,146.0 179.6,159.3 179.7,173.3 179.8,187.9 180.0,202.9 180.1,218.2 180.2,233.6 180.3,248.9 180.5,264.0 180.6,278.8 180.7,293.1 180.9,306.7 181.0,319.6 181.1,331.5 181.2,342.5 181.4,352.3 181.5,360.9 181.6,368.1 181.7,374.0 181.9,378.4 182.0,381.3 182.1,382.7 182.2,382.5 182.4,380.9 182.5,377.7 182.6,373.0 182.7,366.9 182.9,359.3 183.0,350.5 183.1,340.5 183.2,329.3 183.4,317.2 183.5,304.1 183.6,290.3 183.7,275.9 183.9,261.0 184.0,245.8 184.1,230.4 184.3,215.0 184.4,199.8 184.5,184.8 184.6,170.2 184.8,156.3 184.9,143.0 185.0,130.6 185.1,119.2 185.3,108.9 185.4,99.8 185.5,92.0 185.6,85.5 185.8,80.5 185.9,76.9 186.0,74.9 186.1,74.4 186.3,75.4 186.4,78.0 186.5,82.1 186.6,87.7 186.8,94.6 186.9,102.9 187.0,112.5 187.1,123.2 187.3,135.0 187.4,147.7 187.5,161.3 187.7,175.5 187.8,190.2 187.9,205.4 188.0,220.7 188.2,236.2 188.3,251.6 188.4,266.7 188.5,281.5 188.7,295.8 188.8,309.3 188.9,322.1 189.0,334.0 189.2,344.8 189.3,354.4 189.4,362.8 189.5,369.9 189.7,375.5 189.8,379.7 189.9,382.4 190.0,383.5 190.2,383.1 190.3,381.2 190.4,377.7 190.5,372.7 190.7,366.3 190.8,358.6 190.9,349.5 191.1,339.2 191.2,327.8 191.3,315.4 191.4,302.2 191.6,288.2 191.7,273.7 191.8,258.6 191.9,243.3 192.1,227.8 192.2,212.4 192.3,197.1 192.4,182.1 192.6,167.6 192.7,153.7 192.8,140.5 192.9,128.2 193.1,116.9 193.2,106.8 193.3,97.8 193.4,90.2 193.6,84.0 193.7,79.2 193.8,75.8 193.9,74.1 194.1,73.8 194.2,75.1 194.3,78.0 194.5,82.3 194.6,88.2 194.7,95.4 194.8,104.0 195.0,113.8 195.1,124.7 195.2,136.7 195.3,149.6 195.5,163.4 195.6,177.7 195.7,192.6 195.8,207.9 196.0,223.3 196.1,238.8 196.2,254.2 196.3,269.4 196.5,284.2 196.6,298.4 196.7,311.9 196.8,324.5 197.0,336.3 197.1,346.9 197.2,356.4 197.3,364.6 197.5,371.5 197.6,376.9 197.7,380.8 197.9,383.2 198.0,384.1 198.1,383.4 198.2,381.2 198.4,377.5 198.5,372.3 198.6,365.6 198.7,357.6 198.9,348.2 199.0,337.7 199.1,326.1 199.2,313.6 199.4,300.1 199.5,286.0 199.6,271.3 199.7,256.2 199.9,240.8 200.0,225.2 200.1,209.7 200.2,194.4 200.4,179.5 200.5,165.0 200.6,151.1 200.7,138.1 200.9,125.9 201.0,114.8 201.1,104.8 201.3,96.1 201.4,88.6 201.5,82.6 201.6,78.0 201.8,75.0 201.9,73.4 202.0,73.5 202.1,75.1 202.3,78.2 202.4,82.8 202.5,88.9 202.6,96.4 202.8,105.2 202.9,115.2 203.0,126.4 203.1,138.6 203.3,151.7 203.4,165.6 203.5,180.1 203.6,195.1 203.8,210.4 203.9,225.9 204.0,241.5 204.1,256.9 204.3,272.0 204.4,286.7 204.5,300.9 204.7,314.3 204.8,326.9 204.9,338.4 205.0,348.9 205.2,358.2 205.3,366.2 205.4,372.8 205.5,378.0 205.7,381.7 205.8,383.9 205.9,384.5 206.0,383.6 206.2,381.1 206.3,377.1 206.4,371.6 206.5,364.7 206.7,356.4 206.8,346.9 206.9,336.1 207.0,324.3 207.2,311.6 207.3,298.0 207.4,283.7 207.6,268.9 207.7,253.6 207.8,238.2 207.9,222.6 208.1,207.1 208.2,191.8 208.3,176.9 208.4,162.5 208.6,148.7 208.7,135.8 208.8,123.7 208.9,112.8 209.1,103.0 209.2,94.4 209.3,87.2 209.4,81.4 209.6,77.1 209.7,74.3 209.8,73.0 209.9,73.3 210.1,75.1 210.2,78.5 210.3,83.4 210.4,89.7 210.6,97.5 210.7,106.5 210.8,116.8 211.0,128.1 211.1,140.5 211.2,153.8 211.3,167.8 211.5,182.5 211.6,197.6 211.7,213.0 211.8,228.5 212.0,244.1 212.1,259.5 212.2,274.6 212.3,289.3 212.5,303.3 212.6,316.6 212.7,329.1 212.8,340.5 213.0,350.8 213.1,359.9 213.2,367.7 213.3,374.1 213.5,379.0 213.6,382.5 213.7,384.4 213.8,384.8 214.0,383.5 214.1,380.8 214.2,376.5 214.4,370.8 214.5,363.6 214.6,355.1 214.7,345.3 214.9,334.4 215.0,322.4 215.1,309.5 215.2,295.7 215.4,281.3 215.5,266.4 215.6,251.1 215.7,235.6 215.9,220.0 216.0,204.5 216.1,189.2 216.2,174.3 216.4,160.0 216.5,146.3 216.6,133.5 216.7,121.6 216.9,110.8 217.0,101.2 217.1,92.9 217.2,85.9 217.4,80.3 217.5,76.2 217.6,73.7 217.8,72.7 217.9,73.2 218.0,75.4 218.1,79.0 218.3,84.1 218.4,90.7 218.5,98.7 218.6,108.0 218.8,118.4 218.9,130.0 219.0,142.6 219.1,156.0 219.3,170.2 219.4,184.9 219.5,200.1 219.6,215.5 219.8,231.2 219.9,246.7 220.0,262.1 220.1,277.2 220.3,291.8 220.4,305.7 220.5,318.9 220.6,331.2 220.8,342.5 220.9,352.6 221.0,361.5 221.2,369.1 221.3,375.2 221.4,379.9 221.5,383.1 221.7,384.8 221.8,384.9 221.9,383.4 222.0,380.4 222.2,375.9 222.3,369.9 222.4,362.5 222.5,353.7 222.7,343.7 222.8,332.6 222.9,320.4 223.0,307.3 223.2,293.4 223.3,278.9 223.4,263.9 223.5,248.5 223.7,232.9 223.8,217.3 223.9,201.8 224.0,186.6 224.2,171.8 224.3,157.5 224.4,144.0 224.6,131.3 224.7,119.6 224.8,109.0 224.9,99.6 225.1,91.4 225.2,84.7 225.3,79.4 225.4,75.5 225.6,73.2 225.7,72.5 225.8,73.3 225.9,75.7 226.1,79.6 226.2,85.0 226.3,91.8 226.4,100.0 226.6,109.5 226.7,120.2 226.8,132.0 226.9,144.7 227.1,158.3 227.2,172.5 227.3,187.4 227.4,202.6 227.6,218.2 227.7,233.8 227.8,249.4 228.0,264.7 228.1,279.7 228.2,294.2 228.3,308.1 228.5,321.2 228.6,333.3 228.7,344.4 228.8,354.3 229.0,363.0 229.1,370.3 229.2,376.3 229.3,380.7 229.5,383.7 229.6,385.1 229.7,384.9 229.8,383.2 230.0,379.9 230.1,375.1 230.2,368.9 230.3,361.2 230.5,352.2 230.6,342.0 230.7,330.7 230.8,318.4 231.0,305.1 231.1,291.1 231.2,276.5 231.4,261.4 231.5,245.9 231.6,230.3 231.7,214.7 231.9,199.2 232.0,184.0 232.1,169.3 232.2,155.1 232.4,141.7 232.5,129.2 232.6,117.7 232.7,107.2 232.9,98.0 233.0,90.1 233.1,83.6 233.2,78.5 233.4,74.9 233.5,72.9 233.6,72.4 233.7,73.5 233.9,76.1 234.0,80.3 234.1,85.9 234.2,93.0 234.4,101.4 234.5,111.1 234.6,122.0 234.8,134.0 234.9,146.8 235.0,160.6 235.1,175.0 235.3,189.9 235.4,205.2 235.5,220.8 235.6,236.4 235.8,252.0 235.9,267.3 236.0,282.3 236.1,296.7 236.3,310.4 236.4,323.3 236.5,335.3 236.6,346.2 236.8,356.0 236.9,364.4 237.0,371.5 237.1,377.2 237.3,381.4 237.4,384.1 237.5,385.3 237.6,384.8 237.8,382.8 237.9,379.3 238.0,374.3 238.2,367.8 238.3,359.9 238.4,350.7 238.5,340.3 238.7,328.8 238.8,316.3 238.9,302.9 239.0,288.7 239.2,274.0 239.3,258.8 239.4,243.3 239.5,227.7 239.7,212.1 239.8,196.6 239.9,181.5 240.0,166.8 240.2,152.8 240.3,139.5 240.4,127.1 240.5,115.7 240.7,105.5 240.8,96.5 240.9,88.8 241.0,82.5 241.2,77.7 241.3,74.4 241.4,72.6 241.6,72.4 241.7,73.7 241.8,76.6 241.9,81.0 242.1,86.9 242.2,94.2 242.3,102.9 242.4,112.8 242.6,123.9 242.7,136.0 242.8,149.1 242.9,162.9 243.1,177.4 243.2,192.4 243.3,207.8 243.4,223.4 243.6,239.0 243.7,254.6 243.8,269.9 243.9,284.8 244.1,299.1 244.2,312.7 244.3,325.5 244.5,337.3 244.6,348.0 244.7,357.6 244.8,365.8 245.0,372.7 245.1,378.1 245.2,382.1 245.3,384.5 245.5,385.4 245.6,384.7 245.7,382.4 245.8,378.6 246.0,373.3 246.1,366.6 246.2,358.5 246.3,349.1 246.5,338.5 246.6,326.8 246.7,314.1 246.8,300.6 247.0,286.3 247.1,271.5 247.2,256.2 247.3,240.7 247.5,225.1 247.6,209.4 247.7,194.0 247.9,179.0 248.0,164.4 248.1,150.5 248.2,137.3 248.4,125.1 248.5,113.9 248.6,103.8 248.7,95.0 248.9,87.6 249.0,81.5 249.1,76.9 249.2,73.9 249.4,72.4 249.5,72.4 249.6,74.0 249.7,77.2 249.9,81.9 250.0,88.0 250.1,95.5 250.2,104.4 250.4,114.5 250.5,125.8 250.6,138.1 250.7,151.3 250.9,165.3 251.0,179.9 251.1,195.0 251.3,210.4 251.4,226.0 251.5,241.7 251.6,257.2 251.8,272.4 251.9,287.2 252.0,301.4 252.1,314.9 252.3,327.6 252.4,339.2 252.5,349.8 252.6,359.1 252.8,367.1 252.9,373.8 253.0,379.0 253.1,382.7 253.3,384.8 253.4,385.4 253.5,384.5 253.6,381.9 253.8,377.9 253.9,372.4 254.0,365.4 254.1,357.1 254.3,347.4 254.4,336.6 254.5,324.8 254.7,311.9 254.8,298.2 254.9,283.9 255.0,269.0 255.2,253.6 255.3,238.1 255.4,222.4 255.5,206.8 255.7,191.5 255.8,176.5 255.9,162.0 256.0,148.2 256.2,135.2 256.3,123.1 256.4,112.1 256.5,102.2 256.7,93.6 256.8,86.4 256.9,80.6 257.0,76.3 257.2,73.5 257.3,72.2 257.4,72.5 257.5,74.4 257.7,77.8 257.8,82.7 257.9,89.1 258.1,96.9 258.2,106.0 258.3,116.3 258.4,127.8 258.6,140.2 258.7,153.6 258.8,167.7 258.9,182.4 259.1,197.5 259.2,213.0 259.3,228.7 259.4,244.3 259.6,259.8 259.7,275.0 259.8,289.7 259.9,303.8 260.1,317.2 260.2,329.6 260.3,341.1 260.4,351.4 260.6,360.6 260.7,368.4 260.8,374.8 260.9,379.7 261.1,383.2 261.2,385.1 261.3,385.4 261.5,384.2 261.6,381.4 261.7,377.1 261.8,371.3 262.0,364.1 262.1,355.6 262.2,345.7 262.3,334.7 262.5,322.7 262.6,309.7 262.7,295.9 262.8,281.4 263.0,266.4 263.1,251.0 263.2,235.5 263.3,219.8 263.5,204.2 263.6,188.9 263.7,174.0 263.8,159.6 264.0,145.9 264.1,133.0 264.2,121.1 264.3,110.3 264.5,100.7 264.6,92.3 264.7,85.3 264.9,79.7 265.0,75.7 265.1,73.1 265.2,72.1 265.4,72.7 265.5,74.8 265.6,78.5 265.7,83.7 265.9,90.3 266.0,98.3 266.1,107.6 266.2,118.1 266.4,129.8 266.5,142.4 266.6,155.9 266.7,170.1 266.9,184.9 267.0,200.1 267.1,215.6 267.2,231.3 267.4,246.9 267.5,262.4 267.6,277.5 267.7,292.1 267.9,306.1 268.0,319.3 268.1,331.7 268.3,342.9 268.4,353.1 268.5,362.0 268.6,369.6 268.8,375.7 268.9,380.4 269.0,383.6 269.1,385.3 269.3,385.4 269.4,383.9 269.5,380.8 269.6,376.3 269.8,370.2 269.9,362.8 270.0,354.0 270.1,344.0 270.3,332.8 270.4,320.6 270.5,307.4 270.6,293.5 270.8,278.9 270.9,263.9 271.0,248.4 271.1,232.8 271.3,217.2 271.4,201.6 271.5,186.3 271.7,171.5 271.8,157.2 271.9,143.7 272.0,130.9 272.2,119.2 272.3,108.6 272.4,99.1 272.5,91.0 272.7,84.2 272.8,78.9 272.9,75.1 273.0,72.8 273.2,72.1 273.3,72.9 273.4,75.3 273.5,79.2 273.7,84.7 273.8,91.5 273.9,99.8 274.0,109.3 274.2,120.0 274.3,131.8 274.4,144.6 274.5,158.2 274.7,172.5 274.8,187.4 274.9,202.7 275.1,218.3 275.2,233.9 275.3,249.5 275.4,265.0 275.6,280.0 275.7,294.5 275.8,308.4 275.9,321.5 276.1,333.6 276.2,344.7 276.3,354.7 276.4,363.4 276.6,370.7 276.7,376.7 276.8,381.1 276.9,384.0 277.1,385.4 277.2,385.2 277.3,383.5 277.4,380.2 277.6,375.4 277.7,369.1 277.8,361.4 277.9,352.4 278.1,342.2 278.2,330.8 278.3,318.4 278.5,305.2 278.6,291.1 278.7,276.4 278.8,261.3 279.0,245.8 279.1,230.2 279.2,214.5 279.3,199.0 279.5,183.8 279.6,169.0 279.7,154.9 279.8,141.4 280.0,128.9 280.1,117.3 280.2,106.9 280.3,97.7 280.5,89.7 280.6,83.2 280.7,78.1 280.8,74.6 281.0,72.6 281.1,72.1 281.2,73.2 281.3,75.8 281.5,80.0 281.6,85.7 281.7,92.8 281.9,101.3 282.0,111.0 282.1,121.9 282.2,133.9 282.4,146.8 282.5,160.6 282.6,175.0 282.7,190.0 282.9,205.3 283.0,220.9 283.1,236.6 283.2,252.2 283.4,267.5 283.5,282.5 283.6,296.9 283.7,310.7 283.9,323.6 284.0,335.6 284.1,346.5 284.2,356.3 284.4,364.7 284.5,371.9 284.6,377.5 284.8,381.7 284.9,384.4 285.0,385.5 285.1,385.1 285.3,383.1 285.4,379.5 285.5,374.4 285.6,367.9 285.8,360.0 285.9,350.8 286.0,340.4 286.1,328.8 286.3,316.3 286.4,302.9 286.5,288.7 286.6,273.9 286.8,258.7 286.9,243.2 287.0,227.5 287.1,211.9 287.3,196.4 287.4,181.3 287.5,166.6 287.6,152.6 287.8,139.3 287.9,126.9 288.0,115.5 288.2,105.2 288.3,96.2 288.4,88.5 288.5,82.2 288.7,77.4 288.8,74.1 288.9,72.3 289.0,72.1 289.2,73.5 289.3,76.4 289.4,80.9 289.5,86.8 289.7,94.1 289.8,102.8 289.9,112.7 290.0,123.8 290.2,136.0 290.3,149.1 290.4,162.9 290.5,177.5 290.7,192.5 290.8,207.9 290.9,223.5 291.0,239.2 291.2,254.8 291.3,270.1 291.4,285.0 291.6,299.3 291.7,312.9 291.8,325.7 291.9,337.5 292.1,348.3 292.2,357.8 292.3,366.0 292.4,372.9 292.6,378.4 292.7,382.3 292.8,384.7 292.9,385.6 293.1,384.9 293.2,382.6 293.3,378.8 293.4,373.5 293.6,366.7 293.7,358.6 293.8,349.1 293.9,338.5 294.1,326.8 294.2,314.1 294.3,300.5 294.4,286.2 294.6,271.4 294.7,256.1 294.8,240.6 295.0,224.9 295.1,209.3 295.2,193.9 295.3,178.8 295.5,164.2 295.6,150.3 295.7,137.1 295.8,124.9 296.0,113.7 296.1,103.6 296.2,94.8 296.3,87.4 296.5,81.3 296.6,76.7 296.7,73.7 296.8,72.2 297.0,72.3 297.1,73.9 297.2,77.1 297.3,81.7 297.5,87.9 297.6,95.5 297.7,104.4 297.8,114.5 298.0,125.8 298.1,138.1 298.2,151.3 298.4,165.3 298.5,180.0 298.6,195.1 298.7,210.5 298.9,226.2 299.0,241.8 299.1,257.4 299.2,272.6 299.4,287.4 299.5,301.6 299.6,315.1 299.7,327.8 299.9,339.4 300.0,350.0 300.1,359.3 300.2,367.3 300.4,373.9 300.5,379.1 300.6,382.8 300.7,385.0 300.9,385.6 301.0,384.6 301.1,382.1 301.2,378.0 301.4,372.4 301.5,365.4 301.6,357.1 301.8,347.4 301.9,336.6 302.0,324.7 302.1,311.9 302.3,298.2 302.4,283.8 302.5,268.9 302.6,253.5 302.8,237.9 302.9,222.3 303.0,206.7 303.1,191.3 303.3,176.3 303.4,161.8 303.5,148.0 303.6,135.0 303.8,122.9 303.9,111.9 304.0,102.0 304.1,93.5 304.3,86.2 304.4,80.4 304.5,76.1 304.6,73.3 304.8,72.1 304.9,72.4 305.0,74.3 305.2,77.7 305.3,82.7 305.4,89.1 305.5,96.9 305.7,106.0 305.8,116.3 305.9,127.8 306.0,140.3 306.2,153.6 306.3,167.7 306.4,182.5 306.5,197.7 306.7,213.2 306.8,228.8 306.9,244.5 307.0,259.9 307.2,275.1 307.3,289.9 307.4,304.0 307.5,317.3 307.7,329.8 307.8,341.3 307.9,351.6 308.0,360.7 308.2,368.5 308.3,374.9 308.4,379.9 308.6,383.3 308.7,385.2 308.8,385.5 308.9,384.3 309.1,381.5 309.2,377.2 309.3,371.4 309.4,364.1 309.6,355.6 309.7,345.7 309.8,334.7 309.9,322.6 310.1,309.6 310.2,295.8 310.3,281.3 310.4,266.3 310.6,250.9 310.7,235.3 310.8,219.6 310.9,204.1 311.1,188.7 311.2,173.8 311.3,159.4 311.4,145.7 311.6,132.9 311.7,121.0 311.8,110.1 312.0,100.5 312.1,92.1 312.2,85.2 312.3,79.6 312.5,75.5 312.6,73.0 312.7,72.0 312.8,72.6 313.0,74.8 313.1,78.5 313.2,83.6 313.3,90.3 313.5,98.3 313.6,107.6 313.7,118.2 313.8,129.8 314.0,142.5 314.1,156.0 314.2,170.2 314.3,185.0 314.5,200.2 314.6,215.8 314.7,231.4 314.8,247.1 315.0,262.5 315.1,277.6 315.2,292.3 315.4,306.3 315.5,319.5 315.6,331.8 315.7,343.1 315.9,353.2 316.0,362.1 316.1,369.7 316.2,375.9 316.4,380.6 316.5,383.7 316.6,385.4 316.7,385.4 316.9,383.9 317.0,380.9 317.1,376.3 317.2,370.2 317.4,362.8 317.5,354.0 317.6,343.9 317.7,332.7 317.9,320.5 318.0,307.4 318.1,293.4 318.2,278.8 318.4,263.7 318.5,248.3 318.6,232.7 318.8,217.0 318.9,201.5 319.0,186.2 319.1,171.3 319.3,157.1 319.4,143.5 319.5,130.8 319.6,119.1 319.8,108.4 319.9,99.0 320.0,90.9 320.1,84.1 320.3,78.8 320.4,75.0 320.5,72.7 320.6,72.0 320.8,72.9 320.9,75.3 321.0,79.2 321.1,84.7 321.3,91.5 321.4,99.8 321.5,109.3 321.6,120.1 321.8,131.9 321.9,144.7 322.0,158.3 322.2,172.6 322.3,187.5 322.4,202.8 322.5,218.4 322.7,234.1 322.8,249.7 322.9,265.1 323.0,280.1 323.2,294.7 323.3,308.6 323.4,321.6 323.5,333.8 323.7,344.9 323.8,354.8 323.9,363.5 324.0,370.8 324.2,376.8 324.3,381.2 324.4,384.1 324.5,385.5 324.7,385.3 324.8,383.5 324.9,380.2 325.0,375.4 325.2,369.1 325.3,361.4 325.4,352.4 325.6,342.1 325.7,330.8 325.8,318.4 325.9,305.1 326.1,291.0 326.2,276.3 326.3,261.2 326.4,245.7 326.6,230.0 326.7,214.4 326.8,198.9 326.9,183.7 327.1,168.9 327.2,154.7 327.3,141.3 327.4,128.7 327.6,117.2 327.7,106.8 327.8,97.5 327.9,89.6 328.1,83.1 328.2,78.1 328.3,74.5 328.5,72.5 328.6,72.0 328.7,73.2 328.8,75.8 329.0,80.0 329.1,85.7 329.2,92.8 329.3,101.3 329.5,111.1 329.6,122.0 329.7,134.0 329.8,146.9 330.0,160.7 330.1,175.1 330.2,190.1 330.3,205.4 330.5,221.0 330.6,236.7 330.7,252.3 330.8,267.7 331.0,282.6 331.1,297.1 331.2,310.8 331.3,323.7 331.5,335.7 331.6,346.6 331.7,356.4 331.9,364.8 332.0,371.9 332.1,377.6 332.2,381.8 332.4,384.5 332.5,385.6 332.6,385.1 332.7,383.1 332.9,379.5 333.0,374.4 333.1,367.9 333.2,360.0 333.4,350.8 333.5,340.3 333.6,328.7 333.7,316.2 333.9,302.7 334.0,288.6 334.1,273.8 334.2,258.6 334.4,243.1 334.5,227.4 334.6,211.8 334.7,196.3 334.9,181.1 335.0,166.5 335.1,152.4 335.3,139.1 335.4,126.7 335.5,115.4 335.6,105.1 335.8,96.1 335.9,88.4 336.0,82.2 336.1,77.4 336.3,74.1 336.4,72.3 336.5,72.1 336.6,73.5 336.8,76.4 336.9,80.9 337.0,86.8 337.1,94.2 337.3,102.9 337.4,112.8 337.5,123.9 337.6,136.1 337.8,149.2 337.9,163.0 338.0,177.6 338.1,192.6 338.3,208.1 338.4,223.7 338.5,239.3 338.7,254.9 338.8,270.2 338.9,285.1 339.0,299.4 339.2,313.1 339.3,325.8 339.4,337.6 339.5,348.4 339.7,357.9 339.8,366.1 339.9,373.0 340.0,378.4 340.2,382.4 340.3,384.8 340.4,385.6 340.5,384.9 340.7,382.6 340.8,378.8 340.9,373.4 341.0,366.7 341.2,358.5 341.3,349.1 341.4,338.4 341.5,326.7 341.7,314.0 341.8,300.4 341.9,286.1 342.1,271.3 342.2,256.0 342.3,240.4 342.4,224.8 342.6,209.1 342.7,193.7 342.8,178.6 342.9,164.1 343.1,150.1 343.2,137.0 343.3,124.7 343.4,113.6 343.6,103.5 343.7,94.7 343.8,87.3 343.9,81.2 344.1,76.7 344.2,73.7 344.3,72.2 344.4,72.2 344.6,73.9 344.7,77.1 344.8,81.8 344.9,87.9 345.1,95.5 345.2,104.4 345.3,114.6 345.5,125.9 345.6,138.2 345.7,151.4 345.8,165.5 346.0,180.1 346.1,195.2 346.2,210.7 346.3,226.3 346.5,242.0 346.6,257.5 346.7,272.7 346.8,287.6 347.0,301.8 347.1,315.3 347.2,327.9 347.3,339.5 347.5,350.1 347.6,359.4 347.7,367.4 347.8,374.0 348.0,379.2 348.1,382.9 348.2,385.0 348.3,385.6 348.5,384.6 348.6,382.0 348.7,378.0 348.9,372.4 349.0,365.4 349.1,357.0 349.2,347.4 349.4,336.5 349.5,324.6 349.6,311.8 349.7,298.1 349.9,283.7 350.0,268.7 350.1,253.4 350.2,237.8 350.4,222.1 350.5,206.5 350.6,191.1 350.7,176.1 350.9,161.7 351.0,147.8 351.1,134.8 351.2,122.8 351.4,111.8 351.5,101.9 351.6,93.4 351.7,86.2 351.9,80.4 352.0,76.1 352.1,73.3 352.3,72.1 352.4,72.4 352.5,74.3 352.6,77.8 352.8,82.7 352.9,89.1 353.0,96.9 353.1,106.1 353.3,116.4 353.4,127.9 353.5,140.4 353.6,153.8 353.8,167.9 353.9,182.6 354.0,197.8 354.1,213.3 354.3,228.9 354.4,244.6 354.5,260.1 354.6,275.3 354.8,290.0 354.9,304.1 355.0,317.5 355.1,329.9 355.3,341.4 355.4,351.7 355.5,360.8 355.7,368.6 355.8,375.0 355.9,379.9 356.0,383.3 356.2,385.2 356.3,385.5 356.4,384.3 356.5,381.5 356.7,377.1 356.8,371.3 356.9,364.1 357.0,355.5 357.2,345.6 357.3,334.6 357.4,322.5 357.5,309.5 357.7,295.7 357.8,281.2 357.9,266.2 358.0,250.8 358.2,235.2 358.3,219.5 358.4,203.9 358.5,188.6 358.7,173.7 358.8,159.3 358.9,145.6 359.1,132.8 359.2,120.9 359.3,110.0 359.4,100.4 359.6,92.1 359.7,85.1 359.8,79.5 359.9,75.5 360.1,73.0 360.2,72.0 360.3,72.6 360.4,74.8 360.6,78.5 360.7,83.7 360.8,90.3 360.9,98.4 361.1,107.7 361.2,118.3 361.3,129.9 361.4,142.6 361.6,156.1 361.7,170.3 361.8,185.1 361.9,200.4 362.1,215.9 362.2,231.6 362.3,247.2 362.5,262.7 362.6,277.8 362.7,292.4 362.8,306.4 363.0,319.6 363.1,331.9 363.2,343.2 363.3,353.3 363.5,362.2 363.6,369.8 363.7,375.9 363.8,380.6 364.0,383.8 364.1,385.4 364.2,385.4 364.3,383.9 364.5,380.8 364.6,376.3 364.7,370.2 364.8,362.7 365.0,353.9 365.1,343.9 365.2,332.6 365.4,320.4 365.5,307.2 365.6,293.3 365.7,278.7 365.9,263.6 366.0,248.2 366.1,232.5 366.2,216.9 366.4,201.3 366.5,186.1 366.6,171.2 366.7,156.9 366.9,143.4 367.0,130.7 367.1,119.0 367.2,108.3 367.4,98.9 367.5,90.8 367.6,84.1 367.7,78.8 367.9,75.0 368.0,72.7 368.1,72.0 368.2,72.9 368.4,75.3 368.5,79.3 368.6,84.7 368.8,91.6 368.9,99.9 369.0,109.4 369.1,120.2 369.3,132.0 369.4,144.8 369.5,158.4 369.6,172.8 369.8,187.7 369.9,203.0 370.0,218.5 370.1,234.2 370.3,249.8 370.4,265.2 370.5,280.3 370.6,294.8 370.8,308.7 370.9,321.8 371.0,333.9 371.1,345.0 371.3,354.9 371.4,363.6 371.5,370.9 371.6,376.8 371.8,381.2 371.9,384.1 372.0,385.5 372.2,385.3 372.3,383.5 372.4,380.2 372.5,375.3 372.7,369.0 372.8,361.3 372.9,352.3 373.0,342.0 373.2,330.7 373.3,318.2 373.4,304.9 373.5,290.9 373.7,276.2 373.8,261.0 373.9,245.6 374.0,229.9 374.2,214.2 374.3,198.7 374.4,183.5 374.5,168.8 374.7,154.6 374.8,141.2 374.9,128.6 375.0,117.1 375.2,106.7 375.3,97.5 375.4,89.6 375.6,83.1 375.7,78.0 375.8,74.5 375.9,72.5 376.1,72.0 376.2,73.2 376.3,75.9 376.4,80.1 376.6,85.8 376.7,92.9 376.8,101.4 376.9,111.1 377.1,122.1 377.2,134.1 377.3,147.0 377.4,160.8 377.6,175.2 377.7,190.2 377.8,205.6 377.9,221.2 378.1,236.8 378.2,252.4 378.3,267.8 378.4,282.8 378.6,297.2 378.7,310.9 378.8,323.9 379.0,335.8 379.1,346.7 379.2,356.5 379.3,364.9 379.5,372.0 379.6,377.7 379.7,381.8 379.8,384.5 380.0,385.6 380.1,385.1 380.2,383.1 380.3,379.5 380.5,374.4 380.6,367.8 380.7,359.9 380.8,350.7 381.0,340.2 381.1,328.6 381.2,316.1 381.3,302.6 381.5,288.4 381.6,273.7 381.7,258.5 381.8,242.9 382.0,227.3 382.1,211.6 382.2,196.2 382.4,181.0 382.5,166.3 382.6,152.3 382.7,139.0 382.9,126.6 383.0,115.3 383.1,105.0 383.2,96.0 383.4,88.4 383.5,82.1 383.6,77.3 383.7,74.0 383.9,72.3 384.0,72.1 384.1,73.5 384.2,76.5 384.4,80.9 384.5,86.9 384.6,94.2 384.7,102.9 384.9,112.9 385.0,124.0 385.1,136.2 385.2,149.3 385.4,163.2 385.5,177.7 385.6,192.8 385.8,208.2 385.9,223.8 386.0,239.5 386.1,255.0 386.3,270.3 386.4,285.2 386.5,299.6 386.6,313.2 386.8,325.9 386.9,337.7 387.0,348.5 387.1,358.0 387.3,366.2 387.4,373.1 387.5,378.5 387.6,382.4 387.8,384.8 387.9,385.6 388.0,384.9 388.1,382.6 388.3,378.7 388.4,373.4 388.5,366.6 388.6,358.4 388.8,349.0 388.9,338.3 389.0,326.6 389.2,313.9 389.3,300.3 389.4,286.0 389.5,271.1 389.7,255.9 389.8,240.3 389.9,224.6 390.0,209.0 390.2,193.6 390.3,178.5 390.4,163.9 390.5,150.0 390.7,136.9 390.8,124.6 390.9,113.5 391.0,103.4 391.2,94.7 391.3,87.2 391.4,81.2 391.5,76.7 391.7,73.6 391.8,72.2 391.9,72.2 392.0,73.9 392.2,77.1 392.3,81.8 392.4,88.0 392.6,95.6 392.7,104.5 392.8,114.7 392.9,126.0 393.1,138.3 393.2,151.6 393.3,165.6 393.4,180.2 393.6,195.3 393.7,210.8 393.8,226.4 393.9,242.1 394.1,257.6 394.2,272.9 394.3,287.7 394.4,301.9 394.6,315.4 394.7,328.0 394.8,339.6 394.9,350.1 395.1,359.5 395.2,367.5 395.3,374.1 395.4,379.2 395.6,382.9 395.7,385.0 395.8,385.6 396.0,384.6 396.1,382.0 396.2,377.9 396.3,372.3 396.5,365.3 396.6,356.9 396.7,347.3 396.8,336.4 397.0,324.5 397.1,311.6 397.2,297.9 397.3,283.5 397.5,268.6 397.6,253.3 397.7,237.7 397.8,222.0 398.0,206.4 398.1,191.0 398.2,176.0 398.3,161.5 398.5,147.7 398.6,134.7 398.7,122.7 398.8,111.7 399.0,101.9 399.1,93.3 399.2,86.1 399.4,80.3 399.5,76.0 399.6,73.3 399.7,72.1 399.9,72.4 400.0,74.3 400.1,77.8 400.2,82.8 400.4,89.2 400.5,97.0 400.6,106.1 400.7,116.5 400.9,128.0 401.0,140.5 401.1,153.9 401.2,168.0 401.4,182.7 401.5,197.9 401.6,213.4 401.7,229.1 401.9,244.7 402.0,260.2 402.1,275.4 402.2,290.1 402.4,304.2 402.5,317.6 402.6,330.0 402.8,341.5 402.9,351.8 403.0,360.9 403.1,368.7 403.3,375.0 403.4,380.0 403.5,383.4 403.6,385.2 403.8,385.5 403.9,384.3 404.0,381.4 404.1,377.1 404.3,371.3 404.4,364.0 404.5,355.4 404.6,345.5 404.8,334.5 404.9,322.4 405.0,309.4 405.1,295.6 405.3,281.1 405.4,266.0 405.5,250.6 405.7,235.0 405.8,219.4 405.9,203.8 406.0,188.5 406.2,173.5 406.3,159.2 406.4,145.5 406.5,132.6 406.7,120.8 406.8,110.0 406.9,100.3 407.0,92.0 407.2,85.0 407.3,79.5 407.4,75.5 407.5,73.0 407.7,72.0 407.8,72.6 407.9,74.8 408.0,78.5 408.2,83.7 408.3,90.4 408.4,98.5 408.5,107.8 408.7,118.4 408.8,130.0 408.9,142.7 409.1,156.2 409.2,170.4 409.3,185.3 409.4,200.5 409.6,216.1 409.7,231.7 409.8,247.4 409.9,262.8 410.1,277.9 410.2,292.5 410.3,306.5 410.4,319.7 410.6,332.0 410.7,343.3 410.8,353.4 410.9,362.3 411.1,369.8 411.2,376.0 411.3,380.6 411.4,383.8 411.6,385.4 411.7,385.4 411.8,383.9 411.9,380.8 412.1,376.2 412.2,370.1 412.3,362.7 412.5,353.8 412.6,343.8 412.7,332.5 412.8,320.3 413.0,307.1 413.1,293.2 413.2,278.6 413.3,263.5 413.5,248.0 413.6,232.4 413.7,216.7 413.8,201.2 414.0,185.9 414.1,171.1 414.2,156.8 414.3,143.3 414.5,130.6 414.6,118.9 414.7,108.2 414.8,98.8 415.0,90.7 415.1,84.0 415.2,78.7 415.3,74.9 415.5,72.7 415.6,72.0 415.7,72.9 415.9,75.3 416.0,79.3 416.1,84.8 416.2,91.7 416.4,99.9 416.5,109.5 416.6,120.3 416.7,132.1 416.9,144.9 417.0,158.5 417.1,172.9 417.2,187.8 417.4,203.1 417.5,218.7 417.6,234.4 417.7,250.0 417.9,265.4 418.0,280.4 418.1,294.9 418.2,308.8 418.4,321.9 418.5,334.0 418.6,345.1 418.7,355.0 418.9,363.7 419.0,371.0 419.1,376.9 419.3,381.3 419.4,384.2 419.5,385.5 419.6,385.3 419.8,383.5 419.9,380.1 420.0,375.3 420.1,369.0 420.3,361.3 420.4,352.2 420.5,342.0 420.6,330.6 420.8,318.1 420.9,304.8 421.0,290.8 421.1,276.1 421.3,260.9 421.4,245.4 421.5,229.8 421.6,214.1 421.8,198.6 421.9,183.4 422.0,168.6 422.1,154.5 422.3,141.1 422.4,128.5 422.5,117.0 422.7,106.6 422.8,97.4 422.9,89.5 423.0,83.0 423.2,78.0 423.3,74.4 423.4,72.5 423.5,72.0 423.7,73.2 423.8,75.9 423.9,80.1 424.0,85.8 424.2,93.0 424.3,101.5 424.4,111.2 424.5,122.2 424.7,134.2 424.8,147.1 424.9,160.9 425.0,175.4 425.2,190.3 425.3,205.7 425.4,221.3 425.5,237.0 425.7,252.6 425.8,267.9 425.9,282.9 426.1,297.3 426.2,311.1 426.3,324.0 426.4,335.9 426.6,346.8 426.7,356.5 426.8,365.0 426.9,372.1 427.1,377.7 427.2,381.9 427.3,384.5 427.4,385.6 427.6,385.1 427.7,383.0 427.8,379.4 427.9,374.3 428.1,367.8 428.2,359.8 428.3,350.6 428.4,340.1 428.6,328.5 428.7,316.0 428.8,302.5 428.9,288.3 429.1,273.5 429.2,258.3 429.3,242.8 429.5,227.1 429.6,211.5 429.7,196.0 429.8,180.9 430.0,166.2 430.1,152.2 430.2,138.9 430.3,126.5 430.5,115.2 430.6,104.9 430.7,96.0 430.8,88.3 431.0,82.1 431.1,77.3 431.2,74.0 431.3,72.3 431.5,72.1 431.6,73.5 431.7,76.5 431.8,81.0 432.0,86.9 432.1,94.3 432.2,103.0 432.3,113.0 432.5,124.1 432.6,136.3 432.7,149.4 432.9,163.3 433.0,177.8 433.1,192.9 433.2,208.3 433.4,223.9 433.5,239.6 433.6,255.2 433.7,270.5 433.9,285.4 434.0,299.7 434.1,313.3 434.2,326.1 434.4,337.8 434.5,348.6 434.6,358.1 434.7,366.3 434.9,373.1 435.0,378.5 435.1,382.4 435.2,384.8 435.4,385.6 435.5,384.8 435.6,382.5 435.7,378.7 435.9,373.3 436.0,366.5 436.1,358.4 436.3,348.9 436.4,338.2 436.5,326.5 436.6,313.7 436.8,300.2 436.9,285.9 437.0,271.0 437.1,255.7 437.3,240.2 437.4,224.5 437.5,208.9 437.6,193.4 437.8,178.4 437.9,163.8 438.0,149.9 438.1,136.7 438.3,124.5 438.4,113.4 438.5,103.3 438.6,94.6 438.8,87.2 438.9,81.2 439.0,76.6 439.1,73.6 439.3,72.1 439.4,72.3 439.5,73.9 439.7,77.1 439.8,81.9 439.9,88.1 440.0,95.7 440.2,104.6 440.3,114.8 440.4,126.1 440.5,138.4 440.7,151.7 440.8,165.7 440.9,180.3 441.0,195.5 441.2,210.9 441.3,226.6 441.4,242.2 441.5,257.8 441.7,273.0 441.8,287.8 441.9,302.0 442.0,315.5 442.2,328.1 442.3,339.7 442.4,350.2 442.5,359.5 442.7,367.5 442.8,374.1 442.9,379.3 443.1,382.9 443.2,385.0 443.3,385.6 443.4,384.6 443.6,382.0 443.7,377.9 443.8,372.3 443.9,365.3 444.1,356.9 444.2,347.2 444.3,336.3 444.4,324.4 444.6,311.5 444.7,297.8 444.8,283.4 444.9,268.5 445.1,253.1 445.2,237.5 445.3,221.9 445.4,206.3 445.6,190.9 445.7,175.9 445.8,161.4 445.9,147.6 446.1,134.6 446.2,122.6 446.3,111.6 446.5,101.8 446.6,93.2 446.7,86.0 446.8,80.3 447.0,76.0 447.1,73.3 447.2,72.1 447.3,72.4 447.5,74.4 447.6,77.8 447.7,82.8 447.8,89.2 448.0,97.1 448.1,106.2 448.2,116.6 448.3,128.1 448.5,140.6 448.6,154.0 448.7,168.1 448.8,182.9 449.0,198.1 449.1,213.6 449.2,229.2 449.4,244.9 449.5,260.4 449.6,275.5 449.7,290.2 449.9,304.3 450.0,317.7 450.1,330.1 450.2,341.6 450.4,351.9 450.5,361.0 450.6,368.7 450.7,375.1 450.9,380.0 451.0,383.4 451.1,385.2 451.2,385.5 451.4,384.2 451.5,381.4 451.6,377.0 451.7,371.2 451.9,363.9 452.0,355.3 452.1,345.4 452.2,334.4 452.4,322.3 452.5,309.3 452.6,295.4 452.8,280.9 452.9,265.9 453.0,250.5 453.1,234.9 453.3,219.2 453.4,203.7 453.5,188.3 453.6,173.4 453.8,159.0 453.9,145.4 454.0,132.5 454.1,120.7 454.3,109.9 454.4,100.3 454.5,91.9 454.6,85.0 454.8,79.5 454.9,75.4 455.0,72.9 455.1,72.0 455.3,72.6 455.4,74.8 455.5,78.6 455.6,83.8 455.8,90.5 455.9,98.5 456.0,107.9 456.2,118.5 456.3,130.1 456.4,142.8 456.5,156.3 456.7,170.6 456.8,185.4 456.9,200.7 457.0,216.2 457.2,231.9 457.3,247.5 457.4,262.9 457.5,278.0 457.7,292.7 457.8,306.6 457.9,319.8 458.0,332.1 458.2,343.4 458.3,353.5 458.4,362.4 458.5,369.9 458.7,376.0 458.8,380.7 458.9,383.8 459.0,385.4 459.2,385.4 459.3,383.9 459.4,380.8 459.6,376.2 459.7,370.1 459.8,362.6 459.9,353.7 460.1,343.7 460.2,332.4 460.3,320.2 460.4,307.0 460.6,293.0 460.7,278.4 460.8,263.3 460.9,247.9 461.1,232.3 461.2,216.6 461.3,201.1 461.4,185.8 461.6,170.9 461.7,156.7 461.8,143.1 461.9,130.5 462.1,118.8 462.2,108.2 462.3,98.8 462.4,90.7 462.6,83.9 462.7,78.7 462.8,74.9 463.0,72.7 463.1,72.0 463.2,72.9 463.3,75.4 463.5,79.3 463.6,84.8 463.7,91.7 463.8,100.0 464.0,109.6 464.1,120.4 464.2,132.2 464.3,145.0 464.5,158.7 464.6,173.0 464.7,187.9 464.8,203.2 465.0,218.8 465.1,234.5 465.2,250.1 465.3,265.5 465.5,280.5 465.6,295.1 465.7,308.9 465.8,322.0 466.0,334.1 466.1,345.2 466.2,355.1 466.4,363.7 466.5,371.0 466.6,376.9 466.7,381.3 466.9,384.2 467.0,385.5 467.1,385.3 467.2,383.5 467.4,380.1 467.5,375.2 467.6,368.9 467.7,361.2 467.9,352.1 468.0,341.9 468.1,330.4 468.2,318.0 468.4,304.7 468.5,290.6 468.6,275.9 468.7,260.8 468.9,245.3 469.0,229.6 469.1,214.0 469.2,198.5 469.4,183.3 469.5,168.5 469.6,154.4 469.8,140.9 469.9,128.4 470.0,116.9 470.1,106.5 470.3,97.3 470.4,89.4 470.5,83.0 470.6,77.9 470.8,74.4 470.9,72.5 471.0,72.0 471.1,73.2 471.3,75.9 471.4,80.2 471.5,85.9 471.6,93.0 471.8,101.5 471.9,111.3 472.0,122.3 472.1,134.3 472.3,147.3 472.4,161.0 472.5,175.5 472.6,190.5 472.8,205.9 472.9,221.5 473.0,237.1 473.2,252.7 473.3,268.1 473.4,283.0 473.5,297.4 473.7,311.2 473.8,324.1 473.9,336.0 474.0,346.9 474.2,356.6 474.3,365.1 474.4,372.1 474.5,377.8 474.7,381.9 474.8,384.5 474.9,385.6 475.0,385.1 475.2,383.0 475.3,379.4 475.4,374.3 475.5,367.7 475.7,359.8 475.8,350.5 475.9,340.0 476.0,328.4 476.2,315.8 476.3,302.4 476.4,288.2 476.6,273.4 476.7,258.2 476.8,242.7 476.9,227.0 477.1,211.3 477.2,195.9 477.3,180.7 477.4,166.1 477.6,152.0 477.7,138.8 477.8,126.4 477.9,115.1 478.1,104.9 478.2,95.9 478.3,88.2 478.4,82.0 478.6,77.2 478.7,74.0 478.8,72.3 478.9,72.1 479.1,73.6 479.2,76.5 479.3,81.0 479.4,87.0 479.6,94.4 479.7,103.1 479.8,113.1 480.0,124.2 480.1,136.4 480.2,149.5 480.3,163.4 480.5,178.0 480.6,193.0 480.7,208.5 480.8,224.1 481.0,239.8 481.1,255.3 481.2,270.6 481.3,285.5 481.5,299.8 481.6,313.4 481.7,326.2 481.8,337.9 482.0,348.6 482.1,358.1 482.2,366.3 482.3,373.2 482.5,378.6 482.6,382.4 482.7,384.8 482.8,385.6 483.0,384.8 483.1,382.5 483.2,378.6 483.4,373.3 483.5,366.5 483.6,358.3 483.7,348.8 483.9,338.1 484.0,326.4 484.1,313.6 484.2,300.0 484.4,285.7 484.5,270.9 484.6,255.6 484.7,240.0 484.9,224.4 485.0,208.7 485.1,193.3 485.2,178.2 485.4,163.7 485.5,149.8 485.6,136.6 485.7,124.4 485.9,113.3 486.0,103.3 486.1,94.5 486.2,87.1 486.4,81.1 486.5,76.6 486.6,73.6 486.8,72.1 486.9,72.3 487.0,73.9 487.1,77.2 487.3,81.9 487.4,88.1 487.5,95.7 487.6,104.7 487.8,114.9 487.9,126.2 488.0,138.6 488.1,151.8 488.3,165.8 488.4,180.5 488.5,195.6 488.6,211.1 488.8,226.7 488.9,242.4 489.0,257.9 489.1,273.1 489.3,287.9 489.4,302.1 489.5,315.6 489.7,328.2 489.8,339.8 489.9,350.3 490.0,359.6 490.2,367.6 490.3,374.2 490.4,379.3 490.5,383.0 490.7,385.0 490.8,385.6 490.9,384.5 491.0,382.0 491.2,377.8 491.3,372.2 491.4,365.2 491.5,356.8 491.7,347.1 491.8,336.2 491.9,324.3 492.0,311.4 492.2,297.7 492.3,283.3 492.4,268.3 492.5,253.0 492.7,237.4 492.8,221.7 492.9,206.1 493.1,190.7 493.2,175.7 493.3,161.3 493.4,147.5 493.6,134.5 493.7,122.5 493.8,111.5 493.9,101.7 494.1,93.2 494.2,86.0 494.3,80.2 494.4,76.0 494.6,73.2 494.7,72.1 494.8,72.4 494.9,74.4 495.1,77.9 495.2,82.9 495.3,89.3 495.4,97.2 495.6,106.3 495.7,116.7 495.8,128.2 495.9,140.7 496.1,154.1 496.2,168.3 496.3,183.0 496.5,198.2 496.6,213.7 496.7,229.4 496.8,245.0 497.0,260.5 497.1,275.7 497.2,290.4 497.3,304.5 497.5,317.8 497.6,330.2 497.7,341.7 497.8,352.0 498.0,361.0 498.1,368.8 498.2,375.1 498.3,380.0 498.5,383.4 498.6,385.2 498.7,385.5 498.8,384.2 499.0,381.4 499.1,377.0 499.2,371.1 499.3,363.9 499.5,355.2 499.6,345.4 499.7,334.3 499.9,322.2 500.0,309.2 500.1,295.3 500.2,280.8 500.4,265.8 500.5,250.4 500.6,234.8 500.7,219.1 500.9,203.5 501.0,188.2 501.1,173.3 501.2,158.9 501.4,145.2 501.5,132.4 501.6,120.6 501.7,109.8 501.9,100.2 502.0,91.9 502.1,84.9 502.2,79.4 502.4,75.4 502.5,72.9 502.6,72.0 502.7,72.7 502.9,74.9 503.0,78.6 503.1,83.8 503.3,90.5 503.4,98.6 503.5,108.0 503.6,118.6 503.8,130.3 503.9,142.9 504.0,156.4 504.1,170.7 504.3,185.5 504.4,200.8 504.5,216.3 504.6,232.0 504.8,247.6 504.9,263.1 505.0,278.2 505.1,292.8 505.3,306.8 505.4,320.0 505.5,332.2 505.6,343.5 505.8,353.6 505.9,362.4 506.0,370.0 506.1,376.1 506.3,380.7 506.4,383.8 506.5,385.4 506.7,385.4 506.8,383.8 506.9,380.7 507.0,376.1 507.2,370.0 507.3,362.5 507.4,353.7 507.5,343.6 507.7,332.3 507.8,320.1 507.9,306.9 508.0,292.9 508.2,278.3 508.3,263.2 508.4,247.8 508.5,232.1 508.7,216.5 508.8,200.9 508.9,185.6 509.0,170.8 509.2,156.6 509.3,143.0 509.4,130.4 509.5,118.7 509.7,108.1 509.8,98.7 509.9,90.6 510.1,83.9 510.2,78.6 510.3,74.9 510.4,72.7 510.6,72.0 510.7,72.9 510.8,75.4 510.9,79.4 511.1,84.9 511.2,91.8 511.3,100.1 511.4,109.7 511.6,120.5 511.7,132.3 511.8,145.1 511.9,158.8 512.1,173.2 512.2,188.1 512.3,203.4 512.4,219.0 512.6,234.6 512.7,250.2 512.8,265.6 512.9,280.7 513.1,295.2 513.2,309.0 513.3,322.1 513.5,334.2 513.6,345.3 513.7,355.2 513.8,363.8 514.0,371.1 514.1,377.0 514.2,381.3 514.3,384.2 514.5,385.5 514.6,385.3 514.7,383.4 514.8,380.1 515.0,375.2 515.1,368.9 515.2,361.1 515.3,352.1 515.5,341.8 515.6,330.3 515.7,317.9 515.8,304.6 516.0,290.5 516.1,275.8 516.2,260.6 516.3,245.1 516.5,229.5 516.6,213.8 516.7,198.3 516.9,183.1 517.0,168.4 517.1,154.2 517.2,140.8 517.4,128.3 517.5,116.8 517.6,106.4 517.7,97.2 517.9,89.4 518.0,82.9 518.1,77.9 518.2,74.4 518.4,72.4 518.5,72.0 518.6,73.2 518.7,75.9 518.9,80.2 519.0,85.9 519.1,93.1 519.2,101.6 519.4,111.4 519.5,122.4 519.6,134.4 519.7,147.4 519.9,161.2 520.0,175.6 520.1,190.6 520.3,206.0 520.4,221.6 520.5,237.3 520.6,252.9 520.8,268.2 520.9,283.2 521.0,297.6 521.1,311.3 521.3,324.2 521.4,336.1 521.5,347.0 521.6,356.7 521.8,365.1 521.9,372.2 522.0,377.8 522.1,381.9 522.3,384.5 522.4,385.6 522.5,385.1 522.6,383.0 522.8,379.4 522.9,374.2 523.0,367.6 523.1,359.7 523.3,350.4 523.4,339.9 523.5,328.3 523.7,315.7 523.8,302.3 523.9,288.1 524.0,273.3 524.2,258.0 524.3,242.5 524.4,226.9 524.5,211.2 524.7,195.7 524.8,180.6 524.9,166.0 525.0,151.9 525.2,138.7 525.3,126.3 525.4,115.0 525.5,104.8 525.7,95.8 525.8,88.2 525.9,82.0 526.0,77.2 526.2,74.0 526.3,72.3 526.4,72.1 526.5,73.6 526.7,76.6 526.8,81.1 526.9,87.0 527.1,94.4 527.2,103.2 527.3,113.2 527.4,124.3 527.6,136.5 527.7,149.6 527.8,163.6 527.9,178.1 528.1,193.2 528.2,208.6 528.3,224.2 528.4,239.9 528.6,255.5 528.7,270.7 528.8,285.6 528.9,299.9 529.1,313.5 529.2,326.3 529.3,338.0 529.4,348.7 529.6,358.2 529.7,366.4 529.8,373.2 530.0,378.6 530.1,382.5 530.2,384.8 530.3,385.6 530.5,384.8 530.6,382.5 530.7,378.6 530.8,373.2 531.0,366.4 531.1,358.2 531.2,348.7 531.3,338.0 531.5,326.3 531.6,313.5 531.7,299.9 531.8,285.6 532.0,270.7 532.1,255.4 532.2,239.9 532.3,224.2 532.5,208.6 532.6,193.2 532.7,178.1 532.8,163.5 533.0,149.6 533.1,136.5 533.2,124.3 533.4,113.2 533.5,103.2 533.6,94.4 533.7,87.0 533.9,81.1 534.0,76.6 534.1,73.6 534.2,72.1 534.4,72.3 534.5,74.0 534.6,77.2 534.7,82.0 534.9,88.2 535.0,95.8 535.1,104.8 535.2,115.0 535.4,126.3 535.5,138.7 535.6,151.9 535.7,166.0 535.9,180.6 536.0,195.8 536.1,211.2 536.2,226.9 536.4,242.5 536.5,258.0 536.6,273.3 536.8,288.1 536.9,302.3 537.0,315.7 537.1,328.3 537.3,339.9 537.4,350.4 537.5,359.7 537.6,367.7 537.8,374.2 537.9,379.4 538.0,383.0 538.1,385.1 538.3,385.6 538.4,384.5 538.5,381.9 538.6,377.8 538.8,372.2 538.9,365.1 539.0,356.7 539.1,347.0 539.3,336.1 539.4,324.2 539.5,311.3 539.6,297.6 539.8,283.1 539.9,268.2 540.0,252.8 540.2,237.3 540.3,221.6 540.4,206.0 540.5,190.6 540.7,175.6 540.8,161.2 540.9,147.4 541.0,134.4 541.2,122.4 541.3,111.4 541.4,101.6 541.5,93.1 541.7,85.9 541.8,80.2 541.9,75.9 542.0,73.2 542.2,72.0 542.3,72.4 542.4,74.4 542.5,77.9 542.7,82.9 542.8,89.4 542.9,97.2 543.0,106.4 543.2,116.8 543.3,128.3 543.4,140.8 543.6,154.2 543.7,168.4 543.8,183.1 543.9,198.3 544.1,213.8 544.2,229.5 544.3,245.1 544.4,260.6 544.6,275.8 544.7,290.5 544.8,304.6 544.9,317.9 545.1,330.3 545.2,341.8 545.3,352.1 545.4,361.1 545.6,368.9 545.7,375.2 545.8,380.1 545.9,383.4 546.1,385.3 546.2,385.5 546.3,384.2 546.4,381.3 546.6,377.0 546.7,371.1 546.8,363.8 547.0,355.2 547.1,345.3 547.2,334.2 547.3,322.1 547.5,309.0 547.6,295.2 547.7,280.7 547.8,265.6 548.0,250.2 548.1,234.6 548.2,218.9 548.3,203.4 548.5,188.1 548.6,173.1 548.7,158.8 548.8,145.1 549.0,132.3 549.1,120.5 549.2,109.7 549.3,100.1 549.5,91.8 549.6,84.9 549.7,79.4 549.8,75.4 550.0,72.9 550.1,72.0 550.2,72.7 550.4,74.9 550.5,78.6 550.6,83.9 550.7,90.6 550.9,98.7 551.0,108.1 551.1,118.7 551.2,130.4 551.4,143.0 551.5,156.6 551.6,170.8 551.7,185.7 551.9,200.9 552.0,216.5 552.1,232.1 552.2,247.8 552.4,263.2 552.5,278.3 552.6,292.9 552.7,306.9 552.9,320.1 553.0,332.3 553.1,343.6 553.2,353.7 553.4,362.5 553.5,370.0 553.6,376.1 553.8,380.7 553.9,383.9 554.0,385.4 554.1,385.4 554.3,383.8 554.4,380.7 554.5,376.1 554.6,370.0 554.8,362.4 554.9,353.6 555.0,343.5 555.1,332.2 555.3,319.9 555.4,306.8 555.5,292.8 555.6,278.2 555.8,263.1 555.9,247.6 556.0,232.0 556.1,216.3 556.3,200.8 556.4,185.5 556.5,170.7 556.6,156.4 556.8,142.9 556.9,130.2 557.0,118.6 557.2,108.0 557.3,98.6 557.4,90.5 557.5,83.8 557.7,78.6 557.8,74.9 557.9,72.7 558.0,72.0 558.2,72.9 558.3,75.4 558.4,79.4 558.5,84.9 558.7,91.9 558.8,100.2 558.9,109.8 559.0,120.6 559.2,132.4 559.3,145.3 559.4,158.9 559.5,173.3 559.7,188.2 559.8,203.5 559.9,219.1 560.0,234.8 560.2,250.4 560.3,265.8 560.4,280.8 560.6,295.3 560.7,309.2 560.8,322.2 560.9,334.3 561.1,345.4 561.2,355.2 561.3,363.9 561.4,371.1 561.6,377.0 561.7,381.4 561.8,384.2 561.9,385.5 562.1,385.2 562.2,383.4 562.3,380.0 562.4,375.1 562.6,368.8 562.7,361.0 562.8,352.0 562.9,341.7 563.1,330.2 563.2,317.8 563.3,304.5 563.4,290.4 563.6,275.7 563.7,260.5 563.8,245.0 564.0,229.3 564.1,213.7 564.2,198.2 564.3,183.0 564.5,168.2 564.6,154.1 564.7,140.7 564.8,128.2 565.0,116.7 565.1,106.3 565.2,97.2 565.3,89.3 565.5,82.9 565.6,77.9 565.7,74.4 565.8,72.4 566.0,72.1 566.1,73.2 566.2,76.0 566.3,80.2 566.5,86.0 566.6,93.2 566.7,101.7 566.8,111.5 567.0,122.5 567.1,134.5 567.2,147.5 567.4,161.3 567.5,175.8 567.6,190.8 567.7,206.1 567.9,221.7 568.0,237.4 568.1,253.0 568.2,268.3 568.4,283.3 568.5,297.7 568.6,311.4 568.7,324.3 568.9,336.2 569.0,347.1 569.1,356.8 569.2,365.2 569.4,372.2 569.5,377.8 569.6,382.0 569.7,384.5 569.9,385.6 570.0,385.0 570.1,383.0 570.3,379.3 570.4,374.2 570.5,367.6 570.6,359.6 570.8,350.3 570.9,339.8 571.0,328.2 571.1,315.6 571.3,302.1 571.4,287.9 571.5,273.1 571.6,257.9 571.8,242.4 571.9,226.7 572.0,211.1 572.1,195.6 572.3,180.5 572.4,165.8 572.5,151.8 572.6,138.5 572.8,126.2 572.9,114.9 573.0,104.7 573.1,95.7 573.3,88.1 573.4,81.9 573.5,77.2 573.7,73.9 573.8,72.3 573.9,72.1 574.0,73.6 574.2,76.6 574.3,81.1 574.4,87.1 574.5,94.5 574.7,103.3 574.8,113.3 574.9,124.4 575.0,136.6 575.2,149.8 575.3,163.7 575.4,178.2 575.5,193.3 575.7,208.7 575.8,224.4 575.9,240.0 576.0,255.6 576.2,270.9 576.3,285.8 576.4,300.1 576.5,313.6 576.7,326.4 576.8,338.1 576.9,348.8 577.1,358.3 577.2,366.5 577.3,373.3 577.4,378.6 577.6,382.5 577.7,384.8 577.8,385.6 577.9,384.8 578.1,382.4 578.2,378.6 578.3,373.2 578.4,366.3 578.6,358.1 578.7,348.6 578.8,337.9 578.9,326.2 579.1,313.4 579.2,299.8 579.3,285.5 579.4,270.6 579.6,255.3 579.7,239.7 579.8,224.1 579.9,208.5 580.1,193.0 580.2,178.0 580.3,163.4 580.5,149.5 580.6,136.4 580.7,124.2 580.8,113.1 581.0,103.1 581.1,94.4 581.2,87.0 581.3,81.0 581.5,76.5 581.6,73.5 581.7,72.1 581.8,72.3 582.0,74.0 582.1,77.2 582.2,82.0 582.3,88.3 582.5,95.9 582.6,104.9 582.7,115.1 582.8,126.4 583.0,138.8 583.1,152.1 583.2,166.1 583.3,180.7 583.5,195.9 583.6,211.4 583.7,227.0 583.9,242.7 584.0,258.2 584.1,273.4 584.2,288.2 584.4,302.4 584.5,315.8 584.6,328.4 584.7,340.0 584.9,350.5 585.0,359.8 585.1,367.7 585.2,374.3 585.4,379.4 585.5,383.0 585.6,385.1 585.7,385.6 585.9,384.5 586.0,381.9 586.1,377.8 586.2,372.1 586.4,365.1 586.5,356.6 586.6,346.9 586.7,336.0 586.9,324.1 587.0,311.2"/>
</g>
<g stroke="#000" stroke-opacity="0.6" stroke-width="1"><line x1="83.50" y1="464.00" x2="83.50" y2="460.00"/><line x1="83.50" y1="73.00" x2="83.50" y2="77.00"/><line x1="146.50" y1="464.00" x2="146.50" y2="460.00"/><line x1="146.50" y1="73.00" x2="146.50" y2="77.00"/><line x1="209.50" y1="464.00" x2="209.50" y2="460.00"/><line x1="209.50" y1="73.00" x2="209.50" y2="77.00"/><line x1="272.50" y1="464.00" x2="272.50" y2="460.00"/><line x1="272.50" y1="73.00" x2="272.50" y2="77.00"/><line x1="335.50" y1="464.00" x2="335.50" y2="460.00"/><line x1="335.50" y1="73.00" x2="335.50" y2="77.00"/><line x1="398.50" y1="464.00" x2="398.50" y2="460.00"/><line x1="398.50" y1="73.00" x2="398.50" y2="77.00"/><line x1="461.50" y1="464.00" x2="461.50" y2="460.00"/><line x1="461.50" y1="73.00" x2="461.50" y2="77.00"/><line x1="524.50" y1="464.00" x2="524.50" y2="460.00"/><line x1="524.50" y1="73.00" x2="524.50" y2="77.00"/><line x1="587.50" y1="464.00" x2="587.50" y2="460.00"/><line x1="587.50" y1="73.00" x2="587.50" y2="77.00"/><line x1="84.00" y1="464.50" x2="88.00" y2="464.50"/><line x1="587.00" y1="464.50" x2="583.00" y2="464.50"/><line x1="84.00" y1="386.50" x2="88.00" y2="386.50"/><line x1="587.00" y1="386.50" x2="583.00" y2="386.50"/><line x1="84.00" y1="307.50" x2="88.00" y2="307.50"/><line x1="587.00" y1="307.50" x2="583.00" y2="307.50"/><line x1="84.00" y1="229.50" x2="88.00" y2="229.50"/><line x1="587.00" y1="229.50" x2="583.00" y2="229.50"/><line x1="84.00" y1="150.50" x2="88.00" y2="150.50"/><line x1="587.00" y1="150.50" x2="583.00" y2="150.50"/><line x1="84.00" y1="72.50" x2="88.00" y2="72.50"/><line x1="587.00" y1="72.50" x2="583.00" y2="72.50"/></g>
<rect x="83.5" y="72.5" width="504" height="392" fill="none" stroke="#000" stroke-width="1" shape-rendering="crispEdges"/>
<g font-family="'DejaVu Sans','Liberation Sans',sans-serif" font-size="12" fill="#000" stroke="#000" stroke-width="0.1" letter-spacing="0.37"><text x="84.45" y="478" text-anchor="middle">0</text><text x="146.22" y="478" text-anchor="middle">50</text><text x="209.19" y="478" text-anchor="middle">100</text><text x="272.16" y="478" text-anchor="middle">150</text><text x="335.12" y="478" text-anchor="middle">200</text><text x="398.09" y="478" text-anchor="middle">250</text><text x="461.06" y="478" text-anchor="middle">300</text><text x="524.03" y="478" text-anchor="middle">350</text><text x="587.00" y="478" text-anchor="middle">400</text><text x="79.05" y="467" text-anchor="end">−15</text><text x="79.05" y="389" text-anchor="end">−10</text><text x="79.05" y="311" text-anchor="end">−5</text><text x="79.05" y="232" text-anchor="end">0</text><text x="79.05" y="154" text-anchor="end">5</text><text x="79.05" y="75" text-anchor="end">10</text></g>
</svg>
<div class="btn" style="left:5px"></div>
<div class="btn" style="left:35px"></div>
<div class="btn" style="left:65px"></div>
<div class="btn" style="left:95px"></div>
<div class="btn" style="left:125px"></div>
<div class="btn" style="left:155px;background:#fff"></div>
<div class="btn" style="left:185px"></div>
<svg class="chrome" width="654" height="551" viewBox="0 0 654 551">
<defs>
<linearGradient id="bg" x1="0" y1="0" x2="0" y2="1"><stop offset="0" stop-color="#f8f7f6"/><stop offset="0.5" stop-color="#dddad7"/><stop offset="1" stop-color="#c6c2be"/></linearGradient>
<linearGradient id="bs" x1="0" y1="0" x2="0" y2="1"><stop offset="0" stop-color="#d6d2d0" stop-opacity="0"/><stop offset="0.5" stop-color="#9a9693" stop-opacity=".45"/><stop offset="1" stop-color="#7e7a77"/></linearGradient>
<radialGradient id="teal" cx="0.36" cy="0.28" r="0.75"><stop offset="0" stop-color="#4fe0ea"/><stop offset="0.25" stop-color="#1fa5ba"/><stop offset="0.6" stop-color="#0d7f98"/><stop offset="1" stop-color="#0a5f7a"/></radialGradient>
<linearGradient id="door" x1="0" y1="0" x2="1" y2="0"><stop offset="0" stop-color="#fbd98a"/><stop offset="1" stop-color="#f0a628"/></linearGradient>
<linearGradient id="sub" x1="0" y1="0" x2="1" y2="1"><stop offset="0" stop-color="#4a8fde"/><stop offset="0.5" stop-color="#8cc0f0"/><stop offset="1" stop-color="#e4f2fc"/></linearGradient>
<linearGradient id="subsh" x1="0" y1="0" x2="1" y2="1"><stop offset="0" stop-color="#8a8a8a"/><stop offset="0.35" stop-color="#d8d8d8"/><stop offset="0.6" stop-color="#ffffff"/></linearGradient>
<linearGradient id="wall" x1="0" y1="0" x2="1" y2="0"><stop offset="0" stop-color="#8fa6a8"/><stop offset="0.14" stop-color="#e4eaea"/><stop offset="0.3" stop-color="#ffffff"/><stop offset="0.75" stop-color="#ffffff"/><stop offset="0.9" stop-color="#e0e6e6"/><stop offset="1" stop-color="#9fb2b4"/></linearGradient>
<linearGradient id="lbl" x1="0" y1="0" x2="1" y2="1"><stop offset="0" stop-color="#c5d2db"/><stop offset="1" stop-color="#7d98aa"/></linearGradient>
<linearGradient id="shut" x1="0" y1="0" x2="1" y2="0"><stop offset="0" stop-color="#8d9ba6"/><stop offset="1" stop-color="#c9d0d5"/></linearGradient>
</defs>
<!-- app icon -->
<rect x="6.5" y="3.5" width="15" height="15" fill="#c3dbe4" stroke="#a9b4ba"/>
<path d="M7.6 11.5 C8.4 6.5 9 4.8 9.6 4.8 C10.6 4.8 11.4 17.2 12.5 17.2 C13.6 17.2 14.5 4.8 15.6 4.8 C16.7 4.8 17.5 17.2 18.6 17.2 C19.3 17.2 19.8 15 20.3 12" fill="none" stroke="#d9921c" stroke-width="1.3" stroke-linecap="round"/>
<!-- title buttons -->
<g id="tb">
<circle cx="36.5" cy="11.6" r="7.5" fill="#fff" fill-opacity=".55"/>
<circle cx="36.5" cy="10.9" r="7.5" fill="url(#bs)"/>
<circle cx="36.5" cy="10.5" r="7.1" fill="#8c8885" fill-opacity=".35"/>
<circle cx="36.5" cy="10.4" r="6.6" fill="url(#bg)"/>
<circle cx="593.5" cy="11.6" r="7.5" fill="#fff" fill-opacity=".55"/>
<circle cx="593.5" cy="10.9" r="7.5" fill="url(#bs)"/>
<circle cx="593.5" cy="10.5" r="7.1" fill="#8c8885" fill-opacity=".35"/>
<circle cx="593.5" cy="10.4" r="6.6" fill="url(#bg)"/>
<circle cx="616.5" cy="11.6" r="7.5" fill="#fff" fill-opacity=".55"/>
<circle cx="616.5" cy="10.9" r="7.5" fill="url(#bs)"/>
<circle cx="616.5" cy="10.5" r="7.1" fill="#8c8885" fill-opacity=".35"/>
<circle cx="616.5" cy="10.4" r="6.6" fill="url(#bg)"/>
<circle cx="639.5" cy="11.6" r="7.5" fill="#fff" fill-opacity=".55"/>
<circle cx="639.5" cy="10.9" r="7.5" fill="url(#bs)"/>
<circle cx="639.5" cy="10.5" r="7.1" fill="#8c8885" fill-opacity=".35"/>
<circle cx="639.5" cy="10.4" r="6.6" fill="url(#bg)"/>
</g>
<circle cx="36.4" cy="10.5" r="0.9" fill="#222"/>
<g fill="none" stroke="#fff" stroke-opacity=".8" stroke-width="1.3" stroke-linecap="round" stroke-linejoin="round" transform="translate(0,1)">
<path d="M590.3 9.3 L593.5 12.3 L596.7 9.3"/><path d="M613.3 11.8 L616.5 8.8 L619.7 11.8"/><path d="M636.7 7.6 L642.5 13.4 M642.5 7.6 L636.7 13.4"/></g>
<g fill="none" stroke="#2b2a29" stroke-width="1.3" stroke-linecap="round" stroke-linejoin="round">
<path d="M590.3 9.3 L593.5 12.3 L596.7 9.3"/><path d="M613.3 11.8 L616.5 8.8 L619.7 11.8"/><path d="M636.7 7.6 L642.5 13.4 M642.5 7.6 L636.7 13.4"/></g>
<!-- cursor -->
<path d="M556.5 3.5 L556.5 20.3 L560.3 16.8 L563 22.6 L565.8 21.4 L563.2 15.8 L568.3 15.6 Z" fill="#000" stroke="#fff" stroke-width="1.1" stroke-linejoin="round"/>
<!-- home -->
<g>
<rect x="12.4" y="520.5" width="3.2" height="6" fill="#f8d060" stroke="#b0603a" stroke-width=".7"/>
<path d="M12.4 529 L19.5 522.5 L26 529 L26 541.2 L12.4 541.2 Z" fill="url(#wall)"/>
<path d="M12.2 541.3 H26.2" stroke="#4a8c98" stroke-width=".9"/>
<path d="M15.4 540.8 V531.2 Q15.4 529.4 19 529.4 Q22.6 529.4 22.6 531.2 V540.8 Z" fill="url(#door)" stroke="#a85836" stroke-width=".8"/>
<path d="M19.5 518.8 L30.2 529.6 L28.4 531.9 L19.5 523.2 L9.6 532.9 L7.9 530.5 Z" fill="#b31d43" stroke="#a01538" stroke-width=".4" stroke-linejoin="round"/>
</g>
<!-- back / forward -->
<circle cx="48.9" cy="530.3" r="10.1" fill="url(#teal)" stroke="#0a5a74" stroke-width=".6"/>
<path d="M43 530.3 L49.8 524.6 L49.8 528 L55 528 L55 532.7 L49.8 532.7 L49.8 536 Z" fill="#cfeaee"/>
<circle cx="79" cy="530.3" r="10.1" fill="url(#teal)" stroke="#0a5a74" stroke-width=".6"/>
<path d="M84.9 530.3 L78.1 524.6 L78.1 528 L72.9 528 L72.9 532.7 L78.1 532.7 L78.1 536 Z" fill="#cfeaee"/>
<!-- pan -->
<g fill="#18607f">
<rect x="107.3" y="521.5" width="2.7" height="17"/>
<rect x="100" y="528.7" width="17.4" height="2.7"/>
<path d="M108.65 518.9 L112.3 523 L105 523 Z"/>
<path d="M108.65 541.1 L112.3 537 L105 537 Z"/>
<path d="M97.2 530.05 L101.6 526.4 L101.6 533.7 Z"/>
<path d="M120.2 530.05 L115.8 526.4 L115.8 533.7 Z"/>
</g>
<!-- zoom -->
<g>
<rect x="131.4" y="527.6" width="17" height="11.8" fill="#fff" stroke="#6fbccb" stroke-width=".9"/>
<path d="M140.6 526.7 L150.2 521.1" stroke="#d08a2c" stroke-width="3.6" stroke-linecap="butt"/>
<path d="M141 526.45 L149.8 521.35" stroke="#f7b55e" stroke-width="2.3" stroke-linecap="butt"/>
<circle cx="135.3" cy="531.3" r="7" fill="#b7dfea" fill-opacity=".85" stroke="#9ccfdd" stroke-width=".6"/>
<rect x="132.6" y="528.3" width="7.6" height="7.4" fill="#d8eef3" stroke="#5aaabd" stroke-width=".6"/>
<path d="M133.6 530 H139.2 M133.6 531.8 H139.2 M133.6 533.6 H139.2" stroke="#2e8499" stroke-width="1"/>
</g>
<!-- subplots -->
<g>
<rect x="160.7" y="521.6" width="17.6" height="17.6" rx="1.5" fill="#fff" stroke="#0c0c0c" stroke-width="1.25"/>
<rect x="162" y="523" width="15" height="15" fill="url(#subsh)"/>
<rect x="163.4" y="524.4" width="13.3" height="12.7" fill="url(#sub)"/>
<rect x="165.7" y="526.9" width="9" height="7.5" rx="1.6" fill="#fff" stroke="#0c0c0c" stroke-width="1.2"/>
<rect x="166.5" y="527.9" width="7.4" height="2.2" fill="#a9a9ad"/>
<rect x="168.8" y="527.9" width="2.2" height="2.2" fill="#4f7fe0"/>
<g fill="#3fd352" stroke="#22a336" stroke-width=".7" stroke-linejoin="round">
<path d="M169.1 520.5 L171.8 523.9 L166.4 523.9 Z"/>
<path d="M169.1 540.2 L171.8 536.8 L166.4 536.8 Z"/>
<path d="M159.6 530.1 L163 527.5 L163 532.8 Z"/>
<path d="M180.2 530.1 L176.9 527.5 L176.9 532.8 Z"/>
</g>
</g>
<!-- save -->
<g>
<path d="M188.2 518.8 H209.8 Q211 518.8 211 520 V541 Q211 542.2 209.8 542.2 H188.2 Q187 542.2 187 541 V520 Q187 518.8 188.2 518.8 Z" fill="#0f4d74"/>
<rect x="191.2" y="520" width="15.4" height="2" fill="#c6763a"/>
<rect x="191.2" y="522" width="15.4" height="7" fill="url(#lbl)"/>
<path d="M195.2 524.3 H205 M195.2 526.5 H205" stroke="#164a6c" stroke-width="1"/>
<circle cx="189" cy="522" r=".8" fill="#fff"/><circle cx="208.8" cy="522" r=".8" fill="#fff"/>
<rect x="194" y="534.3" width="10.7" height="6.8" fill="url(#shut)"/>
<rect x="195.2" y="535" width="2.4" height="5.6" fill="#1a2a4a"/>
</g>
</svg>

<div class="edge" style="left:0;background:#ebe9e7"></div><div class="edge" style="left:1px;background:#e4e1df"></div><div class="edge" style="left:652px;background:#e6e3e1"></div><div class="edge" style="left:653px;background:#ebe9e7"></div>
<div style="position:absolute;left:652px;top:272px;width:1px;height:1px;background:#555"></div><div style="position:absolute;left:652px;top:275px;width:1px;height:1px;background:#555"></div><div style="position:absolute;left:652px;top:278px;width:1px;height:1px;background:#555"></div>
</div>
</body></html>
